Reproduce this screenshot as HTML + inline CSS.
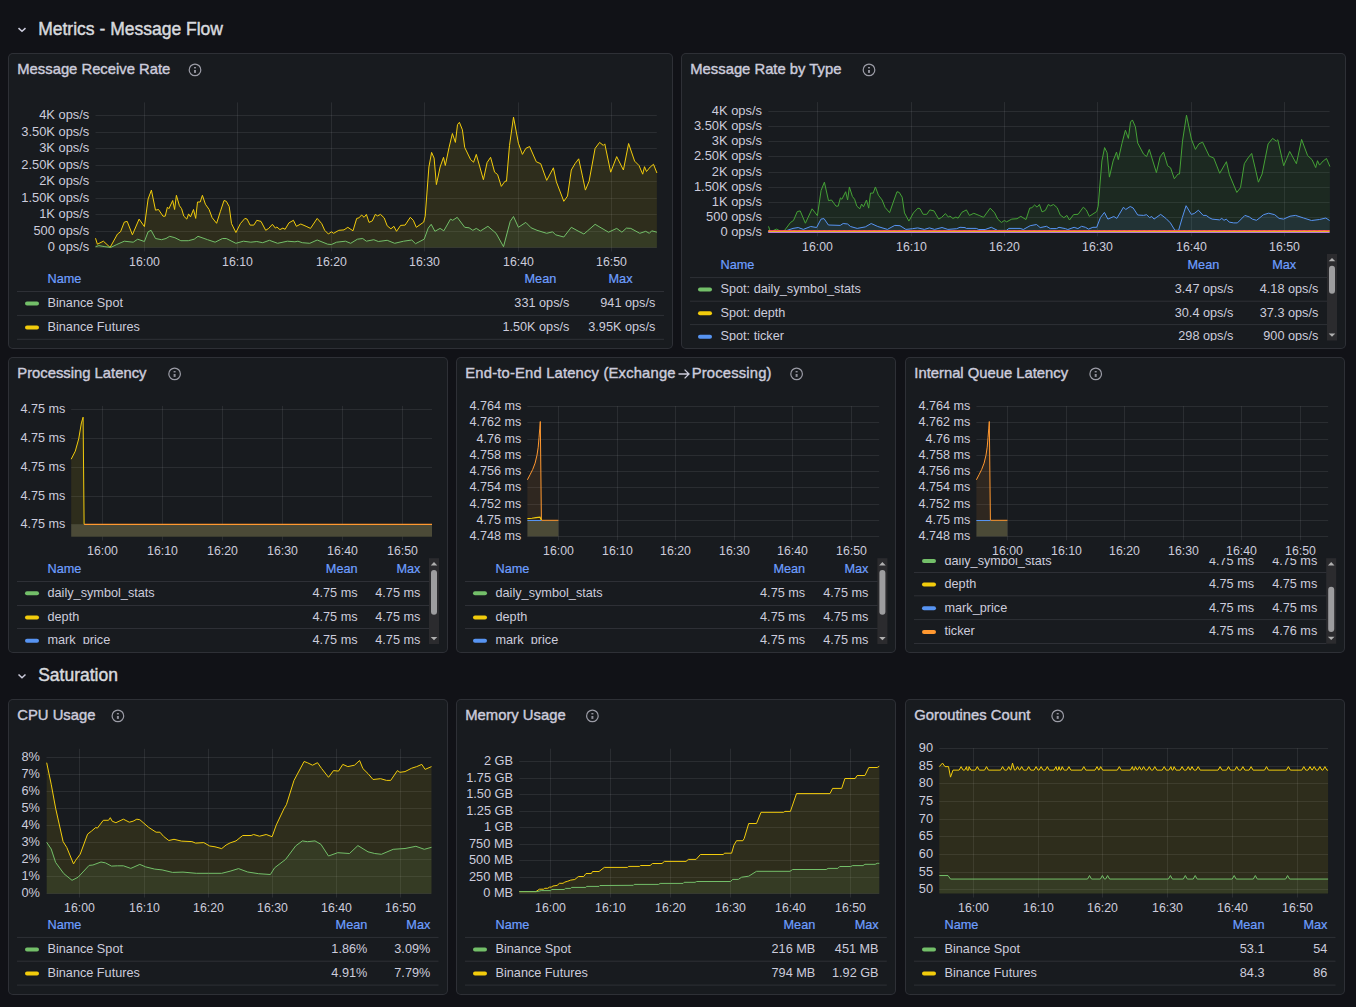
<!DOCTYPE html>
<html><head><meta charset="utf-8"><style>
html,body{margin:0;padding:0;background:#111217;width:1356px;height:1007px;overflow:hidden;position:relative;font-family:"Liberation Sans", sans-serif;}
.p{position:absolute;background:#181b1f;border:1px solid rgba(204,204,220,0.12);border-radius:5px;}
.t{position:absolute;height:20px;line-height:20px;white-space:nowrap;}
svg{position:absolute;left:0;top:0;}
</style></head><body>
<div class="p" style="left:8px;top:53px;width:663px;height:294px"></div><div class="p" style="left:681px;top:53px;width:663px;height:294px"></div><div class="p" style="left:8px;top:357px;width:438px;height:294px"></div><div class="p" style="left:456px;top:357px;width:438px;height:294px"></div><div class="p" style="left:905px;top:357px;width:438px;height:294px"></div><div class="p" style="left:8px;top:699px;width:438px;height:294px"></div><div class="p" style="left:456px;top:699px;width:438px;height:294px"></div><div class="p" style="left:905px;top:699px;width:438px;height:294px"></div>
<svg width="1356" height="1007" viewBox="0 0 1356 1007"><path d="M18.5,28.1 L22,31.3 L25.5,28.1" fill="none" stroke="#ccccdc" stroke-width="1.5"/><g transform="translate(195.0,69.9)"><circle r="5.8" stroke="#9b9ca6" stroke-width="1.2" fill="none"/><rect x="-1" y="-2.9" width="2" height="1.4" fill="#8f909a"/><rect x="-1" y="0.1" width="2" height="2.9" fill="#8f909a"/></g><line x1="95.5" y1="115.5" x2="656.8" y2="115.5" stroke="rgba(204,204,220,0.10)" stroke-width="1"/><line x1="95.5" y1="132.5" x2="656.8" y2="132.5" stroke="rgba(204,204,220,0.10)" stroke-width="1"/><line x1="95.5" y1="148.5" x2="656.8" y2="148.5" stroke="rgba(204,204,220,0.10)" stroke-width="1"/><line x1="95.5" y1="165.5" x2="656.8" y2="165.5" stroke="rgba(204,204,220,0.10)" stroke-width="1"/><line x1="95.5" y1="181.5" x2="656.8" y2="181.5" stroke="rgba(204,204,220,0.10)" stroke-width="1"/><line x1="95.5" y1="198.5" x2="656.8" y2="198.5" stroke="rgba(204,204,220,0.10)" stroke-width="1"/><line x1="95.5" y1="214.5" x2="656.8" y2="214.5" stroke="rgba(204,204,220,0.10)" stroke-width="1"/><line x1="95.5" y1="231.5" x2="656.8" y2="231.5" stroke="rgba(204,204,220,0.10)" stroke-width="1"/><line x1="95.5" y1="247.5" x2="656.8" y2="247.5" stroke="rgba(204,204,220,0.10)" stroke-width="1"/><line x1="144.5" y1="102.4" x2="144.5" y2="251.5" stroke="rgba(204,204,220,0.10)" stroke-width="1"/><line x1="237.5" y1="102.4" x2="237.5" y2="251.5" stroke="rgba(204,204,220,0.10)" stroke-width="1"/><line x1="331.5" y1="102.4" x2="331.5" y2="251.5" stroke="rgba(204,204,220,0.10)" stroke-width="1"/><line x1="424.5" y1="102.4" x2="424.5" y2="251.5" stroke="rgba(204,204,220,0.10)" stroke-width="1"/><line x1="518.5" y1="102.4" x2="518.5" y2="251.5" stroke="rgba(204,204,220,0.10)" stroke-width="1"/><line x1="611.5" y1="102.4" x2="611.5" y2="251.5" stroke="rgba(204,204,220,0.10)" stroke-width="1"/><polygon points="95.5,238.2 97.4,244.2 103.4,241.2 110.1,247.4 117.5,234 120.5,231.8 124.3,222.1 127.2,221.4 132.4,234.8 139.1,219.1 144.4,226.6 148.1,199 151.4,190.1 155.5,210.2 158.5,209.5 163,216.2 165.2,216.2 167.4,207.2 168.9,208.7 172.7,200.5 174.6,209.5 176.4,195.3 179.4,205.7 181.6,208.7 183.8,216.2 186.8,219.1 188.6,213.9 190.5,216.9 193.5,209.5 195.7,218.4 197.5,202 200.2,202 202.4,195.3 205.4,204.2 209.1,209.5 212.1,217.6 216.6,223.3 220.3,211.7 224,200.5 226.3,201.3 229.2,206.5 231.5,223.6 235.9,232.5 240.4,223.6 244.9,218.4 247.1,219.1 250.1,225.1 253.8,225.1 256.8,220.3 261,221.4 265.7,230.3 268.7,228.4 272.4,224.3 275.4,228.1 276.9,227 279.9,229.6 282.9,228.1 285.1,229.3 288.9,222.9 293.4,220.3 296.4,226.3 300.8,224 306.1,226.3 310.5,228.4 317.2,218.4 321.7,223.6 324.7,230.3 328.4,234 331.4,231.8 333.6,233.3 338.8,230.3 344,229.9 347.8,227.3 353,230.8 356.7,218.4 358.9,217.9 361.6,215 364.1,217.3 366.4,214.4 369,222.4 372.3,220.9 375.3,214.4 377.5,215.9 380.5,214.4 384.2,217.9 387.2,225.8 390.9,228.8 393.9,226.3 396.5,231.3 400.6,225.4 405.1,225.1 410.3,217.3 413.3,220.3 416.3,227.3 423.7,222.1 425.2,216.2 428.9,167 431.6,152.4 434.1,158.1 436.4,184.6 440.1,167 443.5,157.3 445.3,165.5 449,147.7 452.4,133.5 455.4,142.4 457.5,124.6 459.4,122.3 462.4,129.8 464.7,147.4 470.6,159.6 473.6,162.2 476.3,154.4 483.4,179.7 487.1,162.5 490.6,157.3 494.6,172.2 497.6,174.5 501.3,186.4 505,181.2 506.5,181.2 509.5,145.4 513.5,117.1 518.4,143.2 522.4,154.4 525.8,148.4 529.6,146.5 536.3,161.8 540.7,163.7 546.7,180.4 553.4,167.8 556.4,181.9 563.8,201.3 567.5,196.1 571.3,170 575,163.7 578.7,158.8 582.4,175.9 585.4,190.1 589.1,181.2 595.1,148.4 599.6,142.4 603.3,145.4 604.8,143.9 610.7,172.2 616.7,156.6 623.4,170 628.6,143.5 634.6,161.1 639,165.5 642.7,174.2 644.5,166.7 646.5,171.5 650.2,167 653.5,164.3 656.9,173 656.9,247.5 95.5,247.5" fill="#f2cc0c" fill-opacity="0.1" stroke="none"/><polyline points="95.5,238.2 97.4,244.2 103.4,241.2 110.1,247.4 117.5,234 120.5,231.8 124.3,222.1 127.2,221.4 132.4,234.8 139.1,219.1 144.4,226.6 148.1,199 151.4,190.1 155.5,210.2 158.5,209.5 163,216.2 165.2,216.2 167.4,207.2 168.9,208.7 172.7,200.5 174.6,209.5 176.4,195.3 179.4,205.7 181.6,208.7 183.8,216.2 186.8,219.1 188.6,213.9 190.5,216.9 193.5,209.5 195.7,218.4 197.5,202 200.2,202 202.4,195.3 205.4,204.2 209.1,209.5 212.1,217.6 216.6,223.3 220.3,211.7 224,200.5 226.3,201.3 229.2,206.5 231.5,223.6 235.9,232.5 240.4,223.6 244.9,218.4 247.1,219.1 250.1,225.1 253.8,225.1 256.8,220.3 261,221.4 265.7,230.3 268.7,228.4 272.4,224.3 275.4,228.1 276.9,227 279.9,229.6 282.9,228.1 285.1,229.3 288.9,222.9 293.4,220.3 296.4,226.3 300.8,224 306.1,226.3 310.5,228.4 317.2,218.4 321.7,223.6 324.7,230.3 328.4,234 331.4,231.8 333.6,233.3 338.8,230.3 344,229.9 347.8,227.3 353,230.8 356.7,218.4 358.9,217.9 361.6,215 364.1,217.3 366.4,214.4 369,222.4 372.3,220.9 375.3,214.4 377.5,215.9 380.5,214.4 384.2,217.9 387.2,225.8 390.9,228.8 393.9,226.3 396.5,231.3 400.6,225.4 405.1,225.1 410.3,217.3 413.3,220.3 416.3,227.3 423.7,222.1 425.2,216.2 428.9,167 431.6,152.4 434.1,158.1 436.4,184.6 440.1,167 443.5,157.3 445.3,165.5 449,147.7 452.4,133.5 455.4,142.4 457.5,124.6 459.4,122.3 462.4,129.8 464.7,147.4 470.6,159.6 473.6,162.2 476.3,154.4 483.4,179.7 487.1,162.5 490.6,157.3 494.6,172.2 497.6,174.5 501.3,186.4 505,181.2 506.5,181.2 509.5,145.4 513.5,117.1 518.4,143.2 522.4,154.4 525.8,148.4 529.6,146.5 536.3,161.8 540.7,163.7 546.7,180.4 553.4,167.8 556.4,181.9 563.8,201.3 567.5,196.1 571.3,170 575,163.7 578.7,158.8 582.4,175.9 585.4,190.1 589.1,181.2 595.1,148.4 599.6,142.4 603.3,145.4 604.8,143.9 610.7,172.2 616.7,156.6 623.4,170 628.6,143.5 634.6,161.1 639,165.5 642.7,174.2 644.5,166.7 646.5,171.5 650.2,167 653.5,164.3 656.9,173" fill="none" stroke="#f2cc0c" stroke-width="1.0" stroke-linejoin="round"/><polygon points="95.5,246.7 98.9,245.6 104.9,246.7 110.8,247.4 116.8,244.5 124.3,241.2 133.2,242.2 137.7,239.2 144.4,241.5 148.1,231.8 151.1,230.3 155.5,238.5 161.5,239.7 166,238.5 169.7,236.3 174.9,237.7 180.8,240.7 188.3,240.7 194.2,239.2 198,236.3 207.6,239.7 215.1,242.2 222.5,238.5 226.3,238.5 235.9,243.3 243.4,241.2 250.8,242.2 256.8,241.5 262.7,242.7 269.4,240.3 277.6,243.3 287.4,241.2 294.9,241.8 297.9,241.2 302.3,242.7 309.8,243.3 317.2,240 327.7,244.2 331.4,244.5 336.6,242.2 345.5,241.2 350.7,243.3 357.4,239.2 362.7,238.5 366.4,241.2 373.8,239.7 378.3,241.5 387.2,240.3 394.7,243.3 403.6,241.2 411.8,240 415.5,243.7 424.2,239.2 428.2,228.1 431.2,224.3 434.9,231.3 440.1,228.4 443.8,230.8 450.5,219.1 452.7,220.3 457.2,217.3 464.7,227.3 469.1,227.8 472.8,230.3 476.3,228.4 480.4,231 487.9,226.3 496.1,233.3 503.5,246.7 510.2,221.4 513.5,216.5 518.4,227.3 525.8,222.4 531.1,227.8 537,230.3 546.7,233.3 552.6,231.8 555.6,234.8 563.8,237 571.3,227.3 578,231 583.9,234 587.6,230.8 595.1,224.3 601,227.8 608.5,232.2 616.7,228.4 621.9,232.2 626.4,228.1 630.8,228.4 639.8,233.3 645.7,231.3 649.4,233.3 651.7,230.8 656.9,232.2 656.9,247.5 95.5,247.5" fill="#73bf69" fill-opacity="0.1" stroke="none"/><polyline points="95.5,246.7 98.9,245.6 104.9,246.7 110.8,247.4 116.8,244.5 124.3,241.2 133.2,242.2 137.7,239.2 144.4,241.5 148.1,231.8 151.1,230.3 155.5,238.5 161.5,239.7 166,238.5 169.7,236.3 174.9,237.7 180.8,240.7 188.3,240.7 194.2,239.2 198,236.3 207.6,239.7 215.1,242.2 222.5,238.5 226.3,238.5 235.9,243.3 243.4,241.2 250.8,242.2 256.8,241.5 262.7,242.7 269.4,240.3 277.6,243.3 287.4,241.2 294.9,241.8 297.9,241.2 302.3,242.7 309.8,243.3 317.2,240 327.7,244.2 331.4,244.5 336.6,242.2 345.5,241.2 350.7,243.3 357.4,239.2 362.7,238.5 366.4,241.2 373.8,239.7 378.3,241.5 387.2,240.3 394.7,243.3 403.6,241.2 411.8,240 415.5,243.7 424.2,239.2 428.2,228.1 431.2,224.3 434.9,231.3 440.1,228.4 443.8,230.8 450.5,219.1 452.7,220.3 457.2,217.3 464.7,227.3 469.1,227.8 472.8,230.3 476.3,228.4 480.4,231 487.9,226.3 496.1,233.3 503.5,246.7 510.2,221.4 513.5,216.5 518.4,227.3 525.8,222.4 531.1,227.8 537,230.3 546.7,233.3 552.6,231.8 555.6,234.8 563.8,237 571.3,227.3 578,231 583.9,234 587.6,230.8 595.1,224.3 601,227.8 608.5,232.2 616.7,228.4 621.9,232.2 626.4,228.1 630.8,228.4 639.8,233.3 645.7,231.3 649.4,233.3 651.7,230.8 656.9,232.2" fill="none" stroke="#73bf69" stroke-width="1.0" stroke-linejoin="round"/><line x1="17" y1="291.5" x2="664" y2="291.5" stroke="rgba(204,204,220,0.12)" stroke-width="1"/><line x1="17" y1="315.4" x2="664" y2="315.4" stroke="rgba(204,204,220,0.12)" stroke-width="1"/><line x1="17" y1="339.3" x2="664" y2="339.3" stroke="rgba(204,204,220,0.12)" stroke-width="1"/><rect x="25" y="301.5" width="14" height="4" rx="2" fill="#73bf69"/><rect x="25" y="325.5" width="14" height="4" rx="2" fill="#f2cc0c"/><g transform="translate(869.0,69.9)"><circle r="5.8" stroke="#9b9ca6" stroke-width="1.2" fill="none"/><rect x="-1" y="-2.9" width="2" height="1.4" fill="#8f909a"/><rect x="-1" y="0.1" width="2" height="2.9" fill="#8f909a"/></g><line x1="768.3" y1="111.5" x2="1329.6" y2="111.5" stroke="rgba(204,204,220,0.10)" stroke-width="1"/><line x1="768.3" y1="126.5" x2="1329.6" y2="126.5" stroke="rgba(204,204,220,0.10)" stroke-width="1"/><line x1="768.3" y1="141.5" x2="1329.6" y2="141.5" stroke="rgba(204,204,220,0.10)" stroke-width="1"/><line x1="768.3" y1="156.5" x2="1329.6" y2="156.5" stroke="rgba(204,204,220,0.10)" stroke-width="1"/><line x1="768.3" y1="172.5" x2="1329.6" y2="172.5" stroke="rgba(204,204,220,0.10)" stroke-width="1"/><line x1="768.3" y1="187.5" x2="1329.6" y2="187.5" stroke="rgba(204,204,220,0.10)" stroke-width="1"/><line x1="768.3" y1="202.5" x2="1329.6" y2="202.5" stroke="rgba(204,204,220,0.10)" stroke-width="1"/><line x1="768.3" y1="217.5" x2="1329.6" y2="217.5" stroke="rgba(204,204,220,0.10)" stroke-width="1"/><line x1="768.3" y1="232.5" x2="1329.6" y2="232.5" stroke="rgba(204,204,220,0.10)" stroke-width="1"/><line x1="817.5" y1="102.1" x2="817.5" y2="236.3" stroke="rgba(204,204,220,0.10)" stroke-width="1"/><line x1="911.5" y1="102.1" x2="911.5" y2="236.3" stroke="rgba(204,204,220,0.10)" stroke-width="1"/><line x1="1004.5" y1="102.1" x2="1004.5" y2="236.3" stroke="rgba(204,204,220,0.10)" stroke-width="1"/><line x1="1097.5" y1="102.1" x2="1097.5" y2="236.3" stroke="rgba(204,204,220,0.10)" stroke-width="1"/><line x1="1191.5" y1="102.1" x2="1191.5" y2="236.3" stroke="rgba(204,204,220,0.10)" stroke-width="1"/><line x1="1284.5" y1="102.1" x2="1284.5" y2="236.3" stroke="rgba(204,204,220,0.10)" stroke-width="1"/><polygon points="768.5,226.34 770.4,231.84 776.4,229.09 783.1,232.3 790.5,222.48 793.5,220.46 797.3,211.56 800.2,210.91 805.4,223.22 812.1,208.8 817.4,215.69 821.1,190.35 824.4,182.18 828.5,200.63 831.5,199.99 836,206.14 838.2,206.14 840.4,197.88 841.9,199.26 845.7,191.73 847.6,199.99 849.4,186.96 852.4,196.5 854.6,199.26 856.8,206.14 859.8,208.8 861.6,204.03 863.5,206.78 866.5,199.99 868.7,208.16 870.5,193.11 873.2,193.11 875.4,186.96 878.4,195.13 882.1,199.99 885.1,207.43 889.6,212.66 893.3,202.01 897,191.73 899.3,192.46 902.2,197.24 904.5,212.93 908.9,221.1 913.4,212.93 917.9,208.16 920.1,208.8 923.1,214.31 926.8,214.31 929.8,209.91 934,210.91 938.7,219.08 941.7,217.34 945.4,213.58 948.4,217.07 949.9,216.06 952.9,218.44 955.9,217.07 958.1,218.17 961.9,212.29 966.4,209.91 969.4,215.41 973.8,213.3 979.1,215.41 983.5,217.34 990.2,208.16 994.7,212.93 997.7,219.08 1001.4,222.48 1004.4,220.46 1006.6,221.84 1011.8,219.08 1017,218.72 1020.8,216.33 1026,219.54 1029.7,208.16 1031.9,207.7 1034.6,205.04 1037.1,207.15 1039.4,204.49 1042,211.83 1045.3,210.46 1048.3,204.49 1050.5,205.87 1053.5,204.49 1057.2,207.7 1060.2,214.95 1063.9,217.71 1066.9,215.41 1069.5,220 1073.6,214.59 1078.1,214.31 1083.3,207.15 1086.3,209.91 1089.3,216.33 1096.7,211.56 1098.2,206.14 1101.9,160.98 1104.6,147.58 1107.1,152.81 1109.4,177.13 1113.1,160.98 1116.5,152.08 1118.3,159.6 1122,143.26 1125.4,130.23 1128.4,138.4 1130.5,122.06 1132.4,119.95 1135.4,126.83 1137.7,142.99 1143.6,154.19 1146.6,156.57 1149.3,149.41 1156.4,172.64 1160.1,156.85 1163.6,152.08 1167.6,165.75 1170.6,167.86 1174.3,178.79 1178,174.01 1179.5,174.01 1182.5,141.15 1186.5,115.17 1191.4,139.13 1195.4,149.41 1198.8,143.91 1202.6,142.16 1209.3,156.21 1213.7,157.95 1219.7,173.28 1226.4,161.71 1229.4,174.66 1236.8,192.46 1240.5,187.69 1244.3,163.73 1248,157.95 1251.7,153.45 1255.4,169.15 1258.4,182.18 1262.1,174.01 1268.1,143.91 1272.6,138.4 1276.3,141.15 1277.8,139.78 1283.7,165.75 1289.7,151.43 1296.4,163.73 1301.6,139.41 1307.6,155.56 1312,159.6 1315.7,167.59 1317.5,160.7 1319.5,165.11 1323.2,160.98 1326.5,158.5 1329.9,166.49 1329.9,232.8 768.5,232.8" fill="#45a236" fill-opacity="0.1" stroke="none"/><polyline points="768.5,226.34 770.4,231.84 776.4,229.09 783.1,232.3 790.5,222.48 793.5,220.46 797.3,211.56 800.2,210.91 805.4,223.22 812.1,208.8 817.4,215.69 821.1,190.35 824.4,182.18 828.5,200.63 831.5,199.99 836,206.14 838.2,206.14 840.4,197.88 841.9,199.26 845.7,191.73 847.6,199.99 849.4,186.96 852.4,196.5 854.6,199.26 856.8,206.14 859.8,208.8 861.6,204.03 863.5,206.78 866.5,199.99 868.7,208.16 870.5,193.11 873.2,193.11 875.4,186.96 878.4,195.13 882.1,199.99 885.1,207.43 889.6,212.66 893.3,202.01 897,191.73 899.3,192.46 902.2,197.24 904.5,212.93 908.9,221.1 913.4,212.93 917.9,208.16 920.1,208.8 923.1,214.31 926.8,214.31 929.8,209.91 934,210.91 938.7,219.08 941.7,217.34 945.4,213.58 948.4,217.07 949.9,216.06 952.9,218.44 955.9,217.07 958.1,218.17 961.9,212.29 966.4,209.91 969.4,215.41 973.8,213.3 979.1,215.41 983.5,217.34 990.2,208.16 994.7,212.93 997.7,219.08 1001.4,222.48 1004.4,220.46 1006.6,221.84 1011.8,219.08 1017,218.72 1020.8,216.33 1026,219.54 1029.7,208.16 1031.9,207.7 1034.6,205.04 1037.1,207.15 1039.4,204.49 1042,211.83 1045.3,210.46 1048.3,204.49 1050.5,205.87 1053.5,204.49 1057.2,207.7 1060.2,214.95 1063.9,217.71 1066.9,215.41 1069.5,220 1073.6,214.59 1078.1,214.31 1083.3,207.15 1086.3,209.91 1089.3,216.33 1096.7,211.56 1098.2,206.14 1101.9,160.98 1104.6,147.58 1107.1,152.81 1109.4,177.13 1113.1,160.98 1116.5,152.08 1118.3,159.6 1122,143.26 1125.4,130.23 1128.4,138.4 1130.5,122.06 1132.4,119.95 1135.4,126.83 1137.7,142.99 1143.6,154.19 1146.6,156.57 1149.3,149.41 1156.4,172.64 1160.1,156.85 1163.6,152.08 1167.6,165.75 1170.6,167.86 1174.3,178.79 1178,174.01 1179.5,174.01 1182.5,141.15 1186.5,115.17 1191.4,139.13 1195.4,149.41 1198.8,143.91 1202.6,142.16 1209.3,156.21 1213.7,157.95 1219.7,173.28 1226.4,161.71 1229.4,174.66 1236.8,192.46 1240.5,187.69 1244.3,163.73 1248,157.95 1251.7,153.45 1255.4,169.15 1258.4,182.18 1262.1,174.01 1268.1,143.91 1272.6,138.4 1276.3,141.15 1277.8,139.78 1283.7,165.75 1289.7,151.43 1296.4,163.73 1301.6,139.41 1307.6,155.56 1312,159.6 1315.7,167.59 1317.5,160.7 1319.5,165.11 1323.2,160.98 1326.5,158.5 1329.9,166.49" fill="none" stroke="#45a236" stroke-width="1.0" stroke-linejoin="round"/><polygon points="767.9,231.9 773.8,231.3 782.7,232.4 787.1,230.4 793,228.4 798.2,227.5 803.3,229.4 810.7,226.5 816.6,227.5 821,219.1 824,218.6 828.4,225 840.2,225.4 843.2,223.5 847.6,224 850.5,226.5 857.2,228.4 865.3,226.9 871.2,223.5 877.8,226.5 887.4,229.4 894.8,225.4 900,225.7 905.9,229.4 912.5,228.7 917.7,227.9 924.3,229.4 929.5,227.9 934.6,229.4 942,227.5 947.9,229.4 956.7,228.7 960,227.3 965,227.6 966.3,228.4 976.3,228.4 978.8,229.5 985.1,229.5 991.3,227.3 997.6,230.4 1006.4,230.4 1008.9,228.4 1020.2,228.4 1023.3,229.5 1030.2,225.7 1036.5,224.5 1040.2,227.6 1046.5,226.3 1050.3,228.6 1056.5,228.6 1059,227.3 1065.3,228.6 1067.8,229.5 1074.1,227.3 1077.9,228.6 1081.6,226.3 1085.4,227.3 1088.5,229.1 1092.9,227.3 1096.7,227.3 1100.4,217.6 1104.4,212.4 1107.9,219.1 1113.8,216.5 1116.8,218.4 1123.5,207.2 1125.7,209.5 1130.2,206.5 1133.2,208 1137.7,215 1143.6,215.4 1146.6,214.7 1149.6,217.6 1151.8,216.5 1154,219.1 1160.7,214.4 1165.9,218.4 1170.4,222.9 1174.9,230.3 1178.6,230.3 1182.3,217.6 1186.1,205.7 1191.3,214.4 1194.2,213.5 1198.4,210.2 1203.2,215.4 1206.2,215.4 1209.1,217.6 1212.1,219.1 1219.6,219.9 1221.8,218.4 1224,220.3 1226.3,219.1 1229.2,222.1 1233.7,222.9 1237.4,222.9 1244.9,215.4 1249.3,216.9 1252.3,219.1 1256.5,220.3 1259,218.4 1263.5,214.7 1268.7,213.2 1274.7,214.7 1279.1,218.4 1283.6,219.1 1290,216.2 1295.6,215.4 1303.6,218 1311.5,220.5 1319.5,219.5 1325.8,218 1329.6,220.5 1329.6,232.8 767.9,232.8" fill="#5794f2" fill-opacity="0.1" stroke="none"/><polyline points="767.9,231.9 773.8,231.3 782.7,232.4 787.1,230.4 793,228.4 798.2,227.5 803.3,229.4 810.7,226.5 816.6,227.5 821,219.1 824,218.6 828.4,225 840.2,225.4 843.2,223.5 847.6,224 850.5,226.5 857.2,228.4 865.3,226.9 871.2,223.5 877.8,226.5 887.4,229.4 894.8,225.4 900,225.7 905.9,229.4 912.5,228.7 917.7,227.9 924.3,229.4 929.5,227.9 934.6,229.4 942,227.5 947.9,229.4 956.7,228.7 960,227.3 965,227.6 966.3,228.4 976.3,228.4 978.8,229.5 985.1,229.5 991.3,227.3 997.6,230.4 1006.4,230.4 1008.9,228.4 1020.2,228.4 1023.3,229.5 1030.2,225.7 1036.5,224.5 1040.2,227.6 1046.5,226.3 1050.3,228.6 1056.5,228.6 1059,227.3 1065.3,228.6 1067.8,229.5 1074.1,227.3 1077.9,228.6 1081.6,226.3 1085.4,227.3 1088.5,229.1 1092.9,227.3 1096.7,227.3 1100.4,217.6 1104.4,212.4 1107.9,219.1 1113.8,216.5 1116.8,218.4 1123.5,207.2 1125.7,209.5 1130.2,206.5 1133.2,208 1137.7,215 1143.6,215.4 1146.6,214.7 1149.6,217.6 1151.8,216.5 1154,219.1 1160.7,214.4 1165.9,218.4 1170.4,222.9 1174.9,230.3 1178.6,230.3 1182.3,217.6 1186.1,205.7 1191.3,214.4 1194.2,213.5 1198.4,210.2 1203.2,215.4 1206.2,215.4 1209.1,217.6 1212.1,219.1 1219.6,219.9 1221.8,218.4 1224,220.3 1226.3,219.1 1229.2,222.1 1233.7,222.9 1237.4,222.9 1244.9,215.4 1249.3,216.9 1252.3,219.1 1256.5,220.3 1259,218.4 1263.5,214.7 1268.7,213.2 1274.7,214.7 1279.1,218.4 1283.6,219.1 1290,216.2 1295.6,215.4 1303.6,218 1311.5,220.5 1319.5,219.5 1325.8,218 1329.6,220.5" fill="none" stroke="#5794f2" stroke-width="1.0" stroke-linejoin="round"/><line x1="768.3" y1="230.5" x2="1329.6" y2="230.5" stroke="#f2495c" stroke-width="1"/><line x1="768.3" y1="231.5" x2="1329.6" y2="231.5" stroke="#e0b62a" stroke-width="1"/><line x1="768.3" y1="231" x2="1329.6" y2="231" stroke="#ff9830" stroke-width="0.8" stroke-dasharray="2,3"/><line x1="768.3" y1="232.5" x2="1329.6" y2="232.5" stroke="#b877d9" stroke-width="1"/><clipPath id="c2_254"><rect x="681" y="254" width="646" height="86.5"/></clipPath><g clip-path="url(#c2_254)"><rect x="698" y="287.5" width="14" height="4" rx="2" fill="#73bf69"/><rect x="698" y="311.2" width="14" height="4" rx="2" fill="#f2cc0c"/><rect x="698" y="334.8" width="14" height="4" rx="2" fill="#5794f2"/></g><rect x="1327" y="254" width="10" height="86.5" fill="#2b2b2e"/><rect x="1329" y="265.8" width="6" height="28.0" rx="3" fill="#9d9d9f"/><path d="M1328.7,261.2 L1335.3,261.2 L1332,257.9 Z" fill="#b0b0b0"/><path d="M1328.7,333.5 L1335.3,333.5 L1332,336.8 Z" fill="#b0b0b0"/><line x1="690" y1="277.6" x2="1327" y2="277.6" stroke="rgba(204,204,220,0.12)" stroke-width="1"/><line x1="690" y1="301.2" x2="1327" y2="301.2" stroke="rgba(204,204,220,0.12)" stroke-width="1"/><line x1="690" y1="324.6" x2="1327" y2="324.6" stroke="rgba(204,204,220,0.12)" stroke-width="1"/><g transform="translate(174.6,373.9)"><circle r="5.8" stroke="#9b9ca6" stroke-width="1.2" fill="none"/><rect x="-1" y="-2.9" width="2" height="1.4" fill="#8f909a"/><rect x="-1" y="0.1" width="2" height="2.9" fill="#8f909a"/></g><line x1="71.2" y1="409.5" x2="432" y2="409.5" stroke="rgba(204,204,220,0.10)" stroke-width="1"/><line x1="71.2" y1="438.5" x2="432" y2="438.5" stroke="rgba(204,204,220,0.10)" stroke-width="1"/><line x1="71.2" y1="467.5" x2="432" y2="467.5" stroke="rgba(204,204,220,0.10)" stroke-width="1"/><line x1="71.2" y1="496.5" x2="432" y2="496.5" stroke="rgba(204,204,220,0.10)" stroke-width="1"/><line x1="71.2" y1="524.5" x2="432" y2="524.5" stroke="rgba(204,204,220,0.10)" stroke-width="1"/><line x1="102.5" y1="405.9" x2="102.5" y2="540.6" stroke="rgba(204,204,220,0.10)" stroke-width="1"/><line x1="162.5" y1="405.9" x2="162.5" y2="540.6" stroke="rgba(204,204,220,0.10)" stroke-width="1"/><line x1="222.5" y1="405.9" x2="222.5" y2="540.6" stroke="rgba(204,204,220,0.10)" stroke-width="1"/><line x1="282.5" y1="405.9" x2="282.5" y2="540.6" stroke="rgba(204,204,220,0.10)" stroke-width="1"/><line x1="342.5" y1="405.9" x2="342.5" y2="540.6" stroke="rgba(204,204,220,0.10)" stroke-width="1"/><line x1="402.5" y1="405.9" x2="402.5" y2="540.6" stroke="rgba(204,204,220,0.10)" stroke-width="1"/><rect x="71.2" y="524.3" width="360.8" height="12.400000000000091" fill="#4b4a37"/><polygon points="71.2,459.2 75.3,451.1 78.7,438.9 81.4,422.9 83.1,417.2 84.1,524.3 84.1,524.3 71.2,524.3" fill="#f2cc0c" fill-opacity="0.1" stroke="none"/><polyline points="71.2,459.2 75.3,451.1 78.7,438.9 81.4,422.9 83.1,417.2 84.1,524.3" fill="none" stroke="#f2cc0c" stroke-width="1.0" stroke-linejoin="round"/><line x1="84.1" y1="524.4" x2="432" y2="524.4" stroke="#ff9830" stroke-width="1.1"/><clipPath id="c3_558"><rect x="8" y="558.2" width="421" height="85.79999999999995"/></clipPath><g clip-path="url(#c3_558)"><rect x="25" y="591.3" width="14" height="4" rx="2" fill="#73bf69"/><rect x="25" y="615.5" width="14" height="4" rx="2" fill="#f2cc0c"/><rect x="25" y="638.7" width="14" height="4" rx="2" fill="#5794f2"/><rect x="25" y="662.4" width="14" height="4" rx="2" fill="#ff9830"/></g><rect x="429" y="558.2" width="10" height="85.79999999999995" fill="#2b2b2e"/><rect x="431" y="570" width="6" height="44.700000000000045" rx="3" fill="#9d9d9f"/><path d="M430.7,565.4 L437.3,565.4 L434,562.1 Z" fill="#b0b0b0"/><path d="M430.7,637 L437.3,637 L434,640.3 Z" fill="#b0b0b0"/><line x1="17" y1="581.5" x2="429" y2="581.5" stroke="rgba(204,204,220,0.12)" stroke-width="1"/><line x1="17" y1="605.5" x2="429" y2="605.5" stroke="rgba(204,204,220,0.12)" stroke-width="1"/><line x1="17" y1="628.5" x2="429" y2="628.5" stroke="rgba(204,204,220,0.12)" stroke-width="1"/><g transform="translate(796.6,373.9)"><circle r="5.8" stroke="#9b9ca6" stroke-width="1.2" fill="none"/><rect x="-1" y="-2.9" width="2" height="1.4" fill="#8f909a"/><rect x="-1" y="0.1" width="2" height="2.9" fill="#8f909a"/></g><line x1="527.4" y1="406.5" x2="879.2" y2="406.5" stroke="rgba(204,204,220,0.10)" stroke-width="1"/><line x1="527.4" y1="422.5" x2="879.2" y2="422.5" stroke="rgba(204,204,220,0.10)" stroke-width="1"/><line x1="527.4" y1="439.5" x2="879.2" y2="439.5" stroke="rgba(204,204,220,0.10)" stroke-width="1"/><line x1="527.4" y1="455.5" x2="879.2" y2="455.5" stroke="rgba(204,204,220,0.10)" stroke-width="1"/><line x1="527.4" y1="471.5" x2="879.2" y2="471.5" stroke="rgba(204,204,220,0.10)" stroke-width="1"/><line x1="527.4" y1="487.5" x2="879.2" y2="487.5" stroke="rgba(204,204,220,0.10)" stroke-width="1"/><line x1="527.4" y1="504.5" x2="879.2" y2="504.5" stroke="rgba(204,204,220,0.10)" stroke-width="1"/><line x1="527.4" y1="520.5" x2="879.2" y2="520.5" stroke="rgba(204,204,220,0.10)" stroke-width="1"/><line x1="527.4" y1="536.5" x2="879.2" y2="536.5" stroke="rgba(204,204,220,0.10)" stroke-width="1"/><line x1="558.5" y1="406.2" x2="558.5" y2="540.4" stroke="rgba(204,204,220,0.10)" stroke-width="1"/><line x1="617.5" y1="406.2" x2="617.5" y2="540.4" stroke="rgba(204,204,220,0.10)" stroke-width="1"/><line x1="675.5" y1="406.2" x2="675.5" y2="540.4" stroke="rgba(204,204,220,0.10)" stroke-width="1"/><line x1="734.5" y1="406.2" x2="734.5" y2="540.4" stroke="rgba(204,204,220,0.10)" stroke-width="1"/><line x1="792.5" y1="406.2" x2="792.5" y2="540.4" stroke="rgba(204,204,220,0.10)" stroke-width="1"/><line x1="851.5" y1="406.2" x2="851.5" y2="540.4" stroke="rgba(204,204,220,0.10)" stroke-width="1"/><rect x="527.4" y="520.3" width="31" height="16.100000000000023" fill="#4b4a37"/><polygon points="527.4,479.8 530.3,474.2 532.7,469.4 535.1,463.1 537,455.1 538.2,447.2 539,437.7 539.8,428.1 540.3,421.5 541.4,520.3 558.4,520.3 558.4,520.3 527.4,520.3" fill="#ff9830" fill-opacity="0.1" stroke="none"/><polyline points="527.4,479.8 530.3,474.2 532.7,469.4 535.1,463.1 537,455.1 538.2,447.2 539,437.7 539.8,428.1 540.3,421.5 541.4,520.3 558.4,520.3" fill="none" stroke="#ff9830" stroke-width="1.0" stroke-linejoin="round"/><polyline points="527.4,518.6 532,518.3 536,517.6 540,517.2 541.4,520.3" fill="none" stroke="#f2cc0c" stroke-width="1.1"/><line x1="527.4" y1="520.5" x2="541.4" y2="520.5" stroke="#5794f2" stroke-width="1"/><clipPath id="c4_558"><rect x="456" y="558.2" width="421.4" height="85.79999999999995"/></clipPath><g clip-path="url(#c4_558)"><rect x="473" y="591.3" width="14" height="4" rx="2" fill="#73bf69"/><rect x="473" y="615.5" width="14" height="4" rx="2" fill="#f2cc0c"/><rect x="473" y="638.7" width="14" height="4" rx="2" fill="#5794f2"/><rect x="473" y="662.4" width="14" height="4" rx="2" fill="#ff9830"/></g><rect x="877.4" y="558.2" width="10.0" height="85.79999999999995" fill="#2b2b2e"/><rect x="879.4" y="570" width="6.0" height="44.700000000000045" rx="3" fill="#9d9d9f"/><path d="M879.1,565.4 L885.7,565.4 L882.4,562.1 Z" fill="#b0b0b0"/><path d="M879.1,637 L885.7,637 L882.4,640.3 Z" fill="#b0b0b0"/><line x1="465" y1="581.5" x2="877.4" y2="581.5" stroke="rgba(204,204,220,0.12)" stroke-width="1"/><line x1="465" y1="605.5" x2="877.4" y2="605.5" stroke="rgba(204,204,220,0.12)" stroke-width="1"/><line x1="465" y1="628.5" x2="877.4" y2="628.5" stroke="rgba(204,204,220,0.12)" stroke-width="1"/><g transform="translate(1095.7,373.9)"><circle r="5.8" stroke="#9b9ca6" stroke-width="1.2" fill="none"/><rect x="-1" y="-2.9" width="2" height="1.4" fill="#8f909a"/><rect x="-1" y="0.1" width="2" height="2.9" fill="#8f909a"/></g><line x1="976.4" y1="406.5" x2="1328.2" y2="406.5" stroke="rgba(204,204,220,0.10)" stroke-width="1"/><line x1="976.4" y1="422.5" x2="1328.2" y2="422.5" stroke="rgba(204,204,220,0.10)" stroke-width="1"/><line x1="976.4" y1="439.5" x2="1328.2" y2="439.5" stroke="rgba(204,204,220,0.10)" stroke-width="1"/><line x1="976.4" y1="455.5" x2="1328.2" y2="455.5" stroke="rgba(204,204,220,0.10)" stroke-width="1"/><line x1="976.4" y1="471.5" x2="1328.2" y2="471.5" stroke="rgba(204,204,220,0.10)" stroke-width="1"/><line x1="976.4" y1="487.5" x2="1328.2" y2="487.5" stroke="rgba(204,204,220,0.10)" stroke-width="1"/><line x1="976.4" y1="504.5" x2="1328.2" y2="504.5" stroke="rgba(204,204,220,0.10)" stroke-width="1"/><line x1="976.4" y1="520.5" x2="1328.2" y2="520.5" stroke="rgba(204,204,220,0.10)" stroke-width="1"/><line x1="976.4" y1="536.5" x2="1328.2" y2="536.5" stroke="rgba(204,204,220,0.10)" stroke-width="1"/><line x1="1007.5" y1="406.2" x2="1007.5" y2="540.4" stroke="rgba(204,204,220,0.10)" stroke-width="1"/><line x1="1066.5" y1="406.2" x2="1066.5" y2="540.4" stroke="rgba(204,204,220,0.10)" stroke-width="1"/><line x1="1124.5" y1="406.2" x2="1124.5" y2="540.4" stroke="rgba(204,204,220,0.10)" stroke-width="1"/><line x1="1183.5" y1="406.2" x2="1183.5" y2="540.4" stroke="rgba(204,204,220,0.10)" stroke-width="1"/><line x1="1241.5" y1="406.2" x2="1241.5" y2="540.4" stroke="rgba(204,204,220,0.10)" stroke-width="1"/><line x1="1300.5" y1="406.2" x2="1300.5" y2="540.4" stroke="rgba(204,204,220,0.10)" stroke-width="1"/><rect x="976.4" y="520.3" width="31" height="16.100000000000023" fill="#4b4a37"/><polygon points="976.4,479.8 979.3,474.2 981.7,469.4 984.1,463.1 986,455.1 987.2,447.2 988,437.7 988.8,428.1 989.3,421.5 990.4,520.3 1007.4,520.3 1007.4,520.3 976.4,520.3" fill="#ff9830" fill-opacity="0.1" stroke="none"/><polyline points="976.4,479.8 979.3,474.2 981.7,469.4 984.1,463.1 986,455.1 987.2,447.2 988,437.7 988.8,428.1 989.3,421.5 990.4,520.3 1007.4,520.3" fill="none" stroke="#ff9830" stroke-width="1.0" stroke-linejoin="round"/><line x1="976.4" y1="520.5" x2="990.4" y2="520.5" stroke="#5794f2" stroke-width="1"/><clipPath id="c5_558"><rect x="905" y="558.2" width="421.20000000000005" height="91.79999999999995"/></clipPath><g clip-path="url(#c5_558)"><rect x="922" y="559" width="14" height="4" rx="2" fill="#73bf69"/><rect x="922" y="582.5" width="14" height="4" rx="2" fill="#f2cc0c"/><rect x="922" y="606.2" width="14" height="4" rx="2" fill="#5794f2"/><rect x="922" y="630" width="14" height="4" rx="2" fill="#ff9830"/></g><rect x="1326.2" y="558.2" width="10.0" height="85.5" fill="#2b2b2e"/><rect x="1328.2" y="586.8" width="6.0" height="45.30000000000007" rx="3" fill="#9d9d9f"/><path d="M1327.9,565.4 L1334.5,565.4 L1331.2,562.1 Z" fill="#b0b0b0"/><path d="M1327.9,636.7 L1334.5,636.7 L1331.2,640 Z" fill="#b0b0b0"/><line x1="914" y1="572.5" x2="1326.2" y2="572.5" stroke="rgba(204,204,220,0.12)" stroke-width="1"/><line x1="914" y1="595.8" x2="1326.2" y2="595.8" stroke="rgba(204,204,220,0.12)" stroke-width="1"/><line x1="914" y1="619.6" x2="1326.2" y2="619.6" stroke="rgba(204,204,220,0.12)" stroke-width="1"/><line x1="914" y1="643.5" x2="1326.2" y2="643.5" stroke="rgba(204,204,220,0.12)" stroke-width="1"/><path d="M18.5,674.5 L22,677.7 L25.5,674.5" fill="none" stroke="#ccccdc" stroke-width="1.5"/><g transform="translate(117.9,715.9)"><circle r="5.8" stroke="#9b9ca6" stroke-width="1.2" fill="none"/><rect x="-1" y="-2.9" width="2" height="1.4" fill="#8f909a"/><rect x="-1" y="0.1" width="2" height="2.9" fill="#8f909a"/></g><line x1="46.5" y1="757.5" x2="431.3" y2="757.5" stroke="rgba(204,204,220,0.10)" stroke-width="1"/><line x1="46.5" y1="774.5" x2="431.3" y2="774.5" stroke="rgba(204,204,220,0.10)" stroke-width="1"/><line x1="46.5" y1="791.5" x2="431.3" y2="791.5" stroke="rgba(204,204,220,0.10)" stroke-width="1"/><line x1="46.5" y1="808.5" x2="431.3" y2="808.5" stroke="rgba(204,204,220,0.10)" stroke-width="1"/><line x1="46.5" y1="825.5" x2="431.3" y2="825.5" stroke="rgba(204,204,220,0.10)" stroke-width="1"/><line x1="46.5" y1="842.5" x2="431.3" y2="842.5" stroke="rgba(204,204,220,0.10)" stroke-width="1"/><line x1="46.5" y1="859.5" x2="431.3" y2="859.5" stroke="rgba(204,204,220,0.10)" stroke-width="1"/><line x1="46.5" y1="876.5" x2="431.3" y2="876.5" stroke="rgba(204,204,220,0.10)" stroke-width="1"/><line x1="46.5" y1="893.5" x2="431.3" y2="893.5" stroke="rgba(204,204,220,0.10)" stroke-width="1"/><line x1="79.5" y1="748.8" x2="79.5" y2="897.5" stroke="rgba(204,204,220,0.10)" stroke-width="1"/><line x1="144.5" y1="748.8" x2="144.5" y2="897.5" stroke="rgba(204,204,220,0.10)" stroke-width="1"/><line x1="208.5" y1="748.8" x2="208.5" y2="897.5" stroke="rgba(204,204,220,0.10)" stroke-width="1"/><line x1="272.5" y1="748.8" x2="272.5" y2="897.5" stroke="rgba(204,204,220,0.10)" stroke-width="1"/><line x1="336.5" y1="748.8" x2="336.5" y2="897.5" stroke="rgba(204,204,220,0.10)" stroke-width="1"/><line x1="400.5" y1="748.8" x2="400.5" y2="897.5" stroke="rgba(204,204,220,0.10)" stroke-width="1"/><polygon points="46.7,762.7 51.2,784.2 55.6,808.1 63.1,841.6 66.8,847.5 73.5,863.9 75.7,860.2 80.2,854.2 87.6,834.1 91.4,831.2 95.8,827.4 97.3,828.2 103.3,820.3 108.5,820.3 110.3,817.7 112.2,821.2 115.9,822.7 123.4,819.2 129.3,822.2 133.1,821.2 136.8,819.2 139.8,819.7 148.7,827.4 156.1,832.2 159.9,832.2 163.6,836.4 168.8,840.5 174,839.3 181.5,841.1 191.9,841.6 195.6,843.1 203.8,842.6 209.7,846 215,846.8 221.7,848.6 226.1,845 230.1,842.9 236,840.9 242.7,835.5 251.1,835.5 253.6,834.5 259.5,836.2 266.2,834.5 272.1,836.7 276.3,824.9 283.9,808.9 286.4,804.7 294,780.4 304.1,761.5 307.4,762.7 312.5,765.2 317.5,762.7 321.7,768.6 328.5,777.3 333.5,770.6 338.5,771.1 342.8,764.4 347.8,766.6 354.5,765.2 359.6,760.5 362.9,768.6 368,773.6 373,779.5 380.6,778.7 386.5,780.4 390.7,780.4 397.4,770.6 399.9,772.3 405,771.6 411.7,768.2 416.7,766.6 421.8,764.4 425.1,769.4 431.5,766.6 431.5,893.5 46.7,893.5" fill="#f2cc0c" fill-opacity="0.1" stroke="none"/><polyline points="46.7,762.7 51.2,784.2 55.6,808.1 63.1,841.6 66.8,847.5 73.5,863.9 75.7,860.2 80.2,854.2 87.6,834.1 91.4,831.2 95.8,827.4 97.3,828.2 103.3,820.3 108.5,820.3 110.3,817.7 112.2,821.2 115.9,822.7 123.4,819.2 129.3,822.2 133.1,821.2 136.8,819.2 139.8,819.7 148.7,827.4 156.1,832.2 159.9,832.2 163.6,836.4 168.8,840.5 174,839.3 181.5,841.1 191.9,841.6 195.6,843.1 203.8,842.6 209.7,846 215,846.8 221.7,848.6 226.1,845 230.1,842.9 236,840.9 242.7,835.5 251.1,835.5 253.6,834.5 259.5,836.2 266.2,834.5 272.1,836.7 276.3,824.9 283.9,808.9 286.4,804.7 294,780.4 304.1,761.5 307.4,762.7 312.5,765.2 317.5,762.7 321.7,768.6 328.5,777.3 333.5,770.6 338.5,771.1 342.8,764.4 347.8,766.6 354.5,765.2 359.6,760.5 362.9,768.6 368,773.6 373,779.5 380.6,778.7 386.5,780.4 390.7,780.4 397.4,770.6 399.9,772.3 405,771.6 411.7,768.2 416.7,766.6 421.8,764.4 425.1,769.4 431.5,766.6" fill="none" stroke="#f2cc0c" stroke-width="1.0" stroke-linejoin="round"/><polygon points="46.7,842.3 51.2,849 55.6,862.4 63.8,873.6 72,880.3 78,877.3 89.1,865.4 92.9,865 101,862 105.5,862.9 111.5,866.1 117.4,865.8 123.4,865.8 130.8,868.4 139.8,864.4 145.7,866.9 154.7,869.1 162.1,869.9 172.5,872.4 183,872.1 196.3,873.3 208.3,873.3 221.7,873.3 230.1,871.2 238.5,868.6 247.7,872 258.7,873.7 270.4,874.5 274.6,867.8 285.6,859.4 295.7,845.9 302.4,840.9 307.4,841.7 315,840.9 320.9,844.3 328.5,856 337.7,852.7 349.5,853.5 357.9,845.6 368,851.8 374.7,853.5 381.4,854.3 393.2,849.3 405,848.5 415.9,846.3 424.3,849.3 431.5,847.3 431.5,893.5 46.7,893.5" fill="#73bf69" fill-opacity="0.1" stroke="none"/><polyline points="46.7,842.3 51.2,849 55.6,862.4 63.8,873.6 72,880.3 78,877.3 89.1,865.4 92.9,865 101,862 105.5,862.9 111.5,866.1 117.4,865.8 123.4,865.8 130.8,868.4 139.8,864.4 145.7,866.9 154.7,869.1 162.1,869.9 172.5,872.4 183,872.1 196.3,873.3 208.3,873.3 221.7,873.3 230.1,871.2 238.5,868.6 247.7,872 258.7,873.7 270.4,874.5 274.6,867.8 285.6,859.4 295.7,845.9 302.4,840.9 307.4,841.7 315,840.9 320.9,844.3 328.5,856 337.7,852.7 349.5,853.5 357.9,845.6 368,851.8 374.7,853.5 381.4,854.3 393.2,849.3 405,848.5 415.9,846.3 424.3,849.3 431.5,847.3" fill="none" stroke="#73bf69" stroke-width="1.0" stroke-linejoin="round"/><line x1="17" y1="937.4" x2="438.5" y2="937.4" stroke="rgba(204,204,220,0.12)" stroke-width="1"/><line x1="17" y1="961.2" x2="438.5" y2="961.2" stroke="rgba(204,204,220,0.12)" stroke-width="1"/><line x1="17" y1="985.1" x2="438.5" y2="985.1" stroke="rgba(204,204,220,0.12)" stroke-width="1"/><rect x="25" y="947.5" width="14" height="4" rx="2" fill="#73bf69"/><rect x="25" y="971.4" width="14" height="4" rx="2" fill="#f2cc0c"/><g transform="translate(592.4,715.9)"><circle r="5.8" stroke="#9b9ca6" stroke-width="1.2" fill="none"/><rect x="-1" y="-2.9" width="2" height="1.4" fill="#8f909a"/><rect x="-1" y="0.1" width="2" height="2.9" fill="#8f909a"/></g><line x1="519.3" y1="761.5" x2="879.3" y2="761.5" stroke="rgba(204,204,220,0.10)" stroke-width="1"/><line x1="519.3" y1="778.5" x2="879.3" y2="778.5" stroke="rgba(204,204,220,0.10)" stroke-width="1"/><line x1="519.3" y1="794.5" x2="879.3" y2="794.5" stroke="rgba(204,204,220,0.10)" stroke-width="1"/><line x1="519.3" y1="811.5" x2="879.3" y2="811.5" stroke="rgba(204,204,220,0.10)" stroke-width="1"/><line x1="519.3" y1="827.5" x2="879.3" y2="827.5" stroke="rgba(204,204,220,0.10)" stroke-width="1"/><line x1="519.3" y1="844.5" x2="879.3" y2="844.5" stroke="rgba(204,204,220,0.10)" stroke-width="1"/><line x1="519.3" y1="860.5" x2="879.3" y2="860.5" stroke="rgba(204,204,220,0.10)" stroke-width="1"/><line x1="519.3" y1="877.5" x2="879.3" y2="877.5" stroke="rgba(204,204,220,0.10)" stroke-width="1"/><line x1="519.3" y1="893.5" x2="879.3" y2="893.5" stroke="rgba(204,204,220,0.10)" stroke-width="1"/><line x1="550.5" y1="748.7" x2="550.5" y2="897.5" stroke="rgba(204,204,220,0.10)" stroke-width="1"/><line x1="610.5" y1="748.7" x2="610.5" y2="897.5" stroke="rgba(204,204,220,0.10)" stroke-width="1"/><line x1="670.5" y1="748.7" x2="670.5" y2="897.5" stroke="rgba(204,204,220,0.10)" stroke-width="1"/><line x1="730.5" y1="748.7" x2="730.5" y2="897.5" stroke="rgba(204,204,220,0.10)" stroke-width="1"/><line x1="790.5" y1="748.7" x2="790.5" y2="897.5" stroke="rgba(204,204,220,0.10)" stroke-width="1"/><line x1="850.5" y1="748.7" x2="850.5" y2="897.5" stroke="rgba(204,204,220,0.10)" stroke-width="1"/><polygon points="519.3,891.6 535.9,891.6 539.4,889.2 543.6,889.2 544.7,888.3 547.7,888.3 549.5,887.1 551.2,887.1 553,886 557.1,885.4 559.5,883.3 563,883.3 564.8,882.1 567.8,881.2 570.7,880.1 574.8,879.5 578.4,876.5 583.7,876.5 586,873.5 591.4,873.5 592.5,871.5 599,871.5 604.3,867.4 627.5,867.4 628.5,866.4 639.5,866.4 640.5,865.5 650.1,865.5 652.5,863.5 662,863.5 664.4,861.4 686,861.4 688.4,859.4 696.1,859.4 700.4,854.5 723.4,854.5 724.4,853.2 731.6,853.2 733.9,845.2 736.5,840.7 742.9,840.7 744.2,838.5 748.7,823.5 756.5,823.5 761,812.3 783.6,812.3 784.9,811.4 790.4,811.4 796.5,793.6 830,793.6 832.6,788.4 841.7,788.4 844.9,778.5 855.2,778.5 857.1,775.5 864.9,775.5 868.8,767.5 877.2,767.5 879.3,766.2 879.3,893.5 519.3,893.5" fill="#f2cc0c" fill-opacity="0.1" stroke="none"/><polyline points="519.3,891.6 535.9,891.6 539.4,889.2 543.6,889.2 544.7,888.3 547.7,888.3 549.5,887.1 551.2,887.1 553,886 557.1,885.4 559.5,883.3 563,883.3 564.8,882.1 567.8,881.2 570.7,880.1 574.8,879.5 578.4,876.5 583.7,876.5 586,873.5 591.4,873.5 592.5,871.5 599,871.5 604.3,867.4 627.5,867.4 628.5,866.4 639.5,866.4 640.5,865.5 650.1,865.5 652.5,863.5 662,863.5 664.4,861.4 686,861.4 688.4,859.4 696.1,859.4 700.4,854.5 723.4,854.5 724.4,853.2 731.6,853.2 733.9,845.2 736.5,840.7 742.9,840.7 744.2,838.5 748.7,823.5 756.5,823.5 761,812.3 783.6,812.3 784.9,811.4 790.4,811.4 796.5,793.6 830,793.6 832.6,788.4 841.7,788.4 844.9,778.5 855.2,778.5 857.1,775.5 864.9,775.5 868.8,767.5 877.2,767.5 879.3,766.2" fill="none" stroke="#f2cc0c" stroke-width="1.0" stroke-linejoin="round"/><polygon points="519.3,891.6 537.1,891.6 541.2,890.6 550.6,890.6 551.8,889.5 564.2,889.5 565.4,888.4 570.7,888.4 571.6,887.4 585.8,887.4 586.6,886.4 599,886.4 599.9,885.5 633.3,885.3 634.2,884.4 658.7,884.4 660.1,883.4 683.1,883.4 684.1,882.3 695.1,882.3 696.6,881.5 730.6,881.5 732.6,879.4 738.4,879.4 741.6,877.2 748.7,876.2 756.5,871.3 790,871.3 792.6,869.5 826.2,869.5 828.1,868.4 837.8,868.4 839.7,866.5 850.7,866.5 852.6,865.6 863,865.6 864.9,864.3 875.2,864.3 877.2,863.3 879.3,863.3 879.3,893.5 519.3,893.5" fill="#73bf69" fill-opacity="0.1" stroke="none"/><polyline points="519.3,891.6 537.1,891.6 541.2,890.6 550.6,890.6 551.8,889.5 564.2,889.5 565.4,888.4 570.7,888.4 571.6,887.4 585.8,887.4 586.6,886.4 599,886.4 599.9,885.5 633.3,885.3 634.2,884.4 658.7,884.4 660.1,883.4 683.1,883.4 684.1,882.3 695.1,882.3 696.6,881.5 730.6,881.5 732.6,879.4 738.4,879.4 741.6,877.2 748.7,876.2 756.5,871.3 790,871.3 792.6,869.5 826.2,869.5 828.1,868.4 837.8,868.4 839.7,866.5 850.7,866.5 852.6,865.6 863,865.6 864.9,864.3 875.2,864.3 877.2,863.3 879.3,863.3" fill="none" stroke="#73bf69" stroke-width="1.0" stroke-linejoin="round"/><line x1="465" y1="937.4" x2="886.8" y2="937.4" stroke="rgba(204,204,220,0.12)" stroke-width="1"/><line x1="465" y1="961.2" x2="886.8" y2="961.2" stroke="rgba(204,204,220,0.12)" stroke-width="1"/><line x1="465" y1="985.1" x2="886.8" y2="985.1" stroke="rgba(204,204,220,0.12)" stroke-width="1"/><rect x="473" y="947.5" width="14" height="4" rx="2" fill="#73bf69"/><rect x="473" y="971.4" width="14" height="4" rx="2" fill="#f2cc0c"/><g transform="translate(1057.7,715.9)"><circle r="5.8" stroke="#9b9ca6" stroke-width="1.2" fill="none"/><rect x="-1" y="-2.9" width="2" height="1.4" fill="#8f909a"/><rect x="-1" y="0.1" width="2" height="2.9" fill="#8f909a"/></g><line x1="939.3" y1="748.5" x2="1328.1" y2="748.5" stroke="rgba(204,204,220,0.10)" stroke-width="1"/><line x1="939.3" y1="766.5" x2="1328.1" y2="766.5" stroke="rgba(204,204,220,0.10)" stroke-width="1"/><line x1="939.3" y1="783.5" x2="1328.1" y2="783.5" stroke="rgba(204,204,220,0.10)" stroke-width="1"/><line x1="939.3" y1="801.5" x2="1328.1" y2="801.5" stroke="rgba(204,204,220,0.10)" stroke-width="1"/><line x1="939.3" y1="819.5" x2="1328.1" y2="819.5" stroke="rgba(204,204,220,0.10)" stroke-width="1"/><line x1="939.3" y1="836.5" x2="1328.1" y2="836.5" stroke="rgba(204,204,220,0.10)" stroke-width="1"/><line x1="939.3" y1="854.5" x2="1328.1" y2="854.5" stroke="rgba(204,204,220,0.10)" stroke-width="1"/><line x1="939.3" y1="872.5" x2="1328.1" y2="872.5" stroke="rgba(204,204,220,0.10)" stroke-width="1"/><line x1="939.3" y1="889.5" x2="1328.1" y2="889.5" stroke="rgba(204,204,220,0.10)" stroke-width="1"/><line x1="973.5" y1="748.2" x2="973.5" y2="897.5" stroke="rgba(204,204,220,0.10)" stroke-width="1"/><line x1="1038.5" y1="748.2" x2="1038.5" y2="897.5" stroke="rgba(204,204,220,0.10)" stroke-width="1"/><line x1="1102.5" y1="748.2" x2="1102.5" y2="897.5" stroke="rgba(204,204,220,0.10)" stroke-width="1"/><line x1="1167.5" y1="748.2" x2="1167.5" y2="897.5" stroke="rgba(204,204,220,0.10)" stroke-width="1"/><line x1="1232.5" y1="748.2" x2="1232.5" y2="897.5" stroke="rgba(204,204,220,0.10)" stroke-width="1"/><line x1="1297.5" y1="748.2" x2="1297.5" y2="897.5" stroke="rgba(204,204,220,0.10)" stroke-width="1"/><polygon points="939.3,766.61 942.5,763.1 945,766.61 948.5,766.61 950.5,777.15 953,770.12 959.1,770.12 961.1,766.61 963.1,770.12 964.6,770.12 966.6,766.61 967,770.12 968.6,770.12 969,766.61 971,770.12 975.3,770.12 977.3,766.61 979.3,770.12 984.5,770.12 986.5,766.61 988.5,770.12 1000.6,770.12 1002.6,766.61 1004.6,770.12 1006.8,770.12 1008.8,766.61 1010.5,770.12 1010.8,770.12 1012.5,763.1 1014.5,770.12 1015.5,770.12 1017.5,766.61 1019.5,770.12 1019.7,770.12 1021.7,766.61 1023.7,770.12 1026.7,770.12 1028.7,766.61 1030.7,770.12 1034.1,770.12 1036.1,766.61 1038.1,770.12 1039.1,770.12 1041.1,766.61 1043.1,770.12 1045.3,770.12 1047.3,766.61 1049.3,770.12 1054,770.12 1056,766.61 1057,770.12 1058,770.12 1059,766.61 1060.2,770.12 1061,770.12 1062.2,766.61 1064.2,770.12 1066.9,770.12 1068.9,766.61 1070.9,770.12 1081.8,770.12 1083.8,766.61 1085.8,770.12 1095,770.12 1097,766.61 1098.7,770.12 1099,770.12 1100.7,766.61 1102.7,770.12 1117.3,770.12 1119.3,766.61 1121.3,770.12 1130.4,770.12 1132.4,766.61 1133.4,770.12 1134.4,770.12 1135.4,766.61 1137.4,770.12 1137.4,770.12 1139.4,766.61 1141.4,770.12 1141.6,770.12 1143.6,766.61 1145.6,770.12 1147.3,770.12 1149.3,766.61 1151.3,770.12 1152.8,770.12 1154.8,766.61 1156.8,770.12 1162.2,770.12 1164.2,766.61 1166.2,770.12 1168.9,770.12 1170.9,766.61 1172.1,770.12 1172.9,770.12 1174.1,766.61 1176.1,770.12 1180.1,770.12 1182.1,766.61 1184.1,770.12 1186.3,770.12 1188.3,766.61 1190,770.12 1190.3,770.12 1192,766.61 1194,770.12 1196.2,770.12 1198.2,766.61 1200.2,770.12 1218.1,770.12 1220.1,766.61 1222.1,770.12 1226.5,770.12 1228.5,766.61 1230.5,770.12 1234.7,770.12 1236.7,766.61 1238.7,770.12 1240.9,770.12 1242.9,766.61 1244.9,770.12 1249.1,770.12 1251.1,766.61 1253.1,770.12 1264.5,770.12 1266.5,766.61 1268.5,770.12 1286.4,770.12 1288.4,766.61 1290.4,770.12 1301.8,770.12 1303.8,766.61 1305.8,770.12 1308,770.12 1310,766.61 1312,770.12 1312.2,770.12 1314.2,766.61 1316.2,770.12 1317.9,770.12 1319.9,766.61 1321.9,770.12 1322.9,770.12 1324.9,766.61 1326.9,770.12 1328.1,770.12 1328.1,893.5 939.3,893.5" fill="#f2cc0c" fill-opacity="0.1" stroke="none"/><polyline points="939.3,766.61 942.5,763.1 945,766.61 948.5,766.61 950.5,777.15 953,770.12 959.1,770.12 961.1,766.61 963.1,770.12 964.6,770.12 966.6,766.61 967,770.12 968.6,770.12 969,766.61 971,770.12 975.3,770.12 977.3,766.61 979.3,770.12 984.5,770.12 986.5,766.61 988.5,770.12 1000.6,770.12 1002.6,766.61 1004.6,770.12 1006.8,770.12 1008.8,766.61 1010.5,770.12 1010.8,770.12 1012.5,763.1 1014.5,770.12 1015.5,770.12 1017.5,766.61 1019.5,770.12 1019.7,770.12 1021.7,766.61 1023.7,770.12 1026.7,770.12 1028.7,766.61 1030.7,770.12 1034.1,770.12 1036.1,766.61 1038.1,770.12 1039.1,770.12 1041.1,766.61 1043.1,770.12 1045.3,770.12 1047.3,766.61 1049.3,770.12 1054,770.12 1056,766.61 1057,770.12 1058,770.12 1059,766.61 1060.2,770.12 1061,770.12 1062.2,766.61 1064.2,770.12 1066.9,770.12 1068.9,766.61 1070.9,770.12 1081.8,770.12 1083.8,766.61 1085.8,770.12 1095,770.12 1097,766.61 1098.7,770.12 1099,770.12 1100.7,766.61 1102.7,770.12 1117.3,770.12 1119.3,766.61 1121.3,770.12 1130.4,770.12 1132.4,766.61 1133.4,770.12 1134.4,770.12 1135.4,766.61 1137.4,770.12 1137.4,770.12 1139.4,766.61 1141.4,770.12 1141.6,770.12 1143.6,766.61 1145.6,770.12 1147.3,770.12 1149.3,766.61 1151.3,770.12 1152.8,770.12 1154.8,766.61 1156.8,770.12 1162.2,770.12 1164.2,766.61 1166.2,770.12 1168.9,770.12 1170.9,766.61 1172.1,770.12 1172.9,770.12 1174.1,766.61 1176.1,770.12 1180.1,770.12 1182.1,766.61 1184.1,770.12 1186.3,770.12 1188.3,766.61 1190,770.12 1190.3,770.12 1192,766.61 1194,770.12 1196.2,770.12 1198.2,766.61 1200.2,770.12 1218.1,770.12 1220.1,766.61 1222.1,770.12 1226.5,770.12 1228.5,766.61 1230.5,770.12 1234.7,770.12 1236.7,766.61 1238.7,770.12 1240.9,770.12 1242.9,766.61 1244.9,770.12 1249.1,770.12 1251.1,766.61 1253.1,770.12 1264.5,770.12 1266.5,766.61 1268.5,770.12 1286.4,770.12 1288.4,766.61 1290.4,770.12 1301.8,770.12 1303.8,766.61 1305.8,770.12 1308,770.12 1310,766.61 1312,770.12 1312.2,770.12 1314.2,766.61 1316.2,770.12 1317.9,770.12 1319.9,766.61 1321.9,770.12 1322.9,770.12 1324.9,766.61 1326.9,770.12 1328.1,770.12" fill="none" stroke="#f2cc0c" stroke-width="1.0" stroke-linejoin="round"/><polygon points="939.3,875.54 948,875.54 950.5,879.06 1087.5,879.06 1089.5,875.54 1091.5,879.06 1100.4,879.06 1102.4,875.54 1104.4,879.06 1105.6,879.06 1107.6,875.54 1109.6,879.06 1168.4,879.06 1170.4,875.54 1172.4,879.06 1183.3,879.06 1185.3,875.54 1187.3,879.06 1193.2,879.06 1195.2,875.54 1197.2,879.06 1232.2,879.06 1234.2,875.54 1236.2,879.06 1253.3,879.06 1255.3,875.54 1257.3,879.06 1285.6,879.06 1287.6,875.54 1289.6,879.06 1328.1,879.06 1328.1,893.5 939.3,893.5" fill="#73bf69" fill-opacity="0.1" stroke="none"/><polyline points="939.3,875.54 948,875.54 950.5,879.06 1087.5,879.06 1089.5,875.54 1091.5,879.06 1100.4,879.06 1102.4,875.54 1104.4,879.06 1105.6,879.06 1107.6,875.54 1109.6,879.06 1168.4,879.06 1170.4,875.54 1172.4,879.06 1183.3,879.06 1185.3,875.54 1187.3,879.06 1193.2,879.06 1195.2,875.54 1197.2,879.06 1232.2,879.06 1234.2,875.54 1236.2,879.06 1253.3,879.06 1255.3,875.54 1257.3,879.06 1285.6,879.06 1287.6,875.54 1289.6,879.06 1328.1,879.06" fill="none" stroke="#73bf69" stroke-width="1.0" stroke-linejoin="round"/><line x1="914" y1="937.4" x2="1335.5" y2="937.4" stroke="rgba(204,204,220,0.12)" stroke-width="1"/><line x1="914" y1="961.2" x2="1335.5" y2="961.2" stroke="rgba(204,204,220,0.12)" stroke-width="1"/><line x1="914" y1="985.1" x2="1335.5" y2="985.1" stroke="rgba(204,204,220,0.12)" stroke-width="1"/><rect x="922" y="947.5" width="14" height="4" rx="2" fill="#73bf69"/><rect x="922" y="971.4" width="14" height="4" rx="2" fill="#f2cc0c"/></svg>
<div class="t" style="left:38.2px;top:18.9px;font-size:17.5px;color:#d8d9de;font-weight:normal;-webkit-text-stroke:0.45px #d8d9de;">Metrics - Message Flow</div><div class="t" style="left:17.3px;top:59.4px;font-size:14.8px;color:#ccccdc;font-weight:normal;-webkit-text-stroke:0.4px #ccccdc;">Message Receive Rate</div><div class="t" style="left:-310.7px;width:400px;text-align:right;top:104.7px;font-size:12.9px;color:#ccccdc;font-weight:normal;">4K ops/s</div><div class="t" style="left:-310.7px;width:400px;text-align:right;top:121.7px;font-size:12.9px;color:#ccccdc;font-weight:normal;">3.50K ops/s</div><div class="t" style="left:-310.7px;width:400px;text-align:right;top:137.7px;font-size:12.9px;color:#ccccdc;font-weight:normal;">3K ops/s</div><div class="t" style="left:-310.7px;width:400px;text-align:right;top:154.7px;font-size:12.9px;color:#ccccdc;font-weight:normal;">2.50K ops/s</div><div class="t" style="left:-310.7px;width:400px;text-align:right;top:170.7px;font-size:12.9px;color:#ccccdc;font-weight:normal;">2K ops/s</div><div class="t" style="left:-310.7px;width:400px;text-align:right;top:187.7px;font-size:12.9px;color:#ccccdc;font-weight:normal;">1.50K ops/s</div><div class="t" style="left:-310.7px;width:400px;text-align:right;top:203.7px;font-size:12.9px;color:#ccccdc;font-weight:normal;">1K ops/s</div><div class="t" style="left:-310.7px;width:400px;text-align:right;top:220.7px;font-size:12.9px;color:#ccccdc;font-weight:normal;">500 ops/s</div><div class="t" style="left:-310.7px;width:400px;text-align:right;top:236.7px;font-size:12.9px;color:#ccccdc;font-weight:normal;">0 ops/s</div><div class="t" style="left:94.5px;width:100px;text-align:center;top:251.5px;font-size:12.3px;color:#ccccdc">16:00</div><div class="t" style="left:187.5px;width:100px;text-align:center;top:251.5px;font-size:12.3px;color:#ccccdc">16:10</div><div class="t" style="left:281.5px;width:100px;text-align:center;top:251.5px;font-size:12.3px;color:#ccccdc">16:20</div><div class="t" style="left:374.5px;width:100px;text-align:center;top:251.5px;font-size:12.3px;color:#ccccdc">16:30</div><div class="t" style="left:468.5px;width:100px;text-align:center;top:251.5px;font-size:12.3px;color:#ccccdc">16:40</div><div class="t" style="left:561.5px;width:100px;text-align:center;top:251.5px;font-size:12.3px;color:#ccccdc">16:50</div><div class="t" style="left:47.5px;top:268.6px;font-size:12.7px;color:#6e9fff;font-weight:normal;-webkit-text-stroke:0.2px #6e9fff;">Name</div><div class="t" style="left:156.3px;width:400px;text-align:right;top:268.6px;font-size:12.7px;color:#6e9fff;font-weight:normal;-webkit-text-stroke:0.2px #6e9fff;">Mean</div><div class="t" style="left:232.5px;width:400px;text-align:right;top:268.6px;font-size:12.7px;color:#6e9fff;font-weight:normal;-webkit-text-stroke:0.2px #6e9fff;">Max</div><div class="t" style="left:47.5px;top:293px;font-size:12.7px;color:#ccccdc;font-weight:normal;">Binance Spot</div><div class="t" style="left:169.4px;width:400px;text-align:right;top:293px;font-size:12.7px;color:#ccccdc;font-weight:normal;">331 ops/s</div><div class="t" style="left:255.3px;width:400px;text-align:right;top:293px;font-size:12.7px;color:#ccccdc;font-weight:normal;">941 ops/s</div><div class="t" style="left:47.5px;top:317px;font-size:12.7px;color:#ccccdc;font-weight:normal;">Binance Futures</div><div class="t" style="left:169.4px;width:400px;text-align:right;top:317px;font-size:12.7px;color:#ccccdc;font-weight:normal;">1.50K ops/s</div><div class="t" style="left:255.3px;width:400px;text-align:right;top:317px;font-size:12.7px;color:#ccccdc;font-weight:normal;">3.95K ops/s</div><div class="t" style="left:690.3px;top:59.4px;font-size:14.8px;color:#ccccdc;font-weight:normal;-webkit-text-stroke:0.4px #ccccdc;">Message Rate by Type</div><div class="t" style="left:362px;width:400px;text-align:right;top:100.7px;font-size:12.9px;color:#ccccdc;font-weight:normal;">4K ops/s</div><div class="t" style="left:362px;width:400px;text-align:right;top:115.7px;font-size:12.9px;color:#ccccdc;font-weight:normal;">3.50K ops/s</div><div class="t" style="left:362px;width:400px;text-align:right;top:130.7px;font-size:12.9px;color:#ccccdc;font-weight:normal;">3K ops/s</div><div class="t" style="left:362px;width:400px;text-align:right;top:145.7px;font-size:12.9px;color:#ccccdc;font-weight:normal;">2.50K ops/s</div><div class="t" style="left:362px;width:400px;text-align:right;top:161.7px;font-size:12.9px;color:#ccccdc;font-weight:normal;">2K ops/s</div><div class="t" style="left:362px;width:400px;text-align:right;top:176.7px;font-size:12.9px;color:#ccccdc;font-weight:normal;">1.50K ops/s</div><div class="t" style="left:362px;width:400px;text-align:right;top:191.7px;font-size:12.9px;color:#ccccdc;font-weight:normal;">1K ops/s</div><div class="t" style="left:362px;width:400px;text-align:right;top:206.7px;font-size:12.9px;color:#ccccdc;font-weight:normal;">500 ops/s</div><div class="t" style="left:362px;width:400px;text-align:right;top:221.7px;font-size:12.9px;color:#ccccdc;font-weight:normal;">0 ops/s</div><div class="t" style="left:767.5px;width:100px;text-align:center;top:236.7px;font-size:12.3px;color:#ccccdc">16:00</div><div class="t" style="left:861.5px;width:100px;text-align:center;top:236.7px;font-size:12.3px;color:#ccccdc">16:10</div><div class="t" style="left:954.5px;width:100px;text-align:center;top:236.7px;font-size:12.3px;color:#ccccdc">16:20</div><div class="t" style="left:1047.5px;width:100px;text-align:center;top:236.7px;font-size:12.3px;color:#ccccdc">16:30</div><div class="t" style="left:1141.5px;width:100px;text-align:center;top:236.7px;font-size:12.3px;color:#ccccdc">16:40</div><div class="t" style="left:1234.5px;width:100px;text-align:center;top:236.7px;font-size:12.3px;color:#ccccdc">16:50</div><div class="t" style="left:720.5px;top:254.6px;font-size:12.7px;color:#6e9fff;font-weight:normal;-webkit-text-stroke:0.2px #6e9fff;">Name</div><div class="t" style="left:819.3px;width:400px;text-align:right;top:254.6px;font-size:12.7px;color:#6e9fff;font-weight:normal;-webkit-text-stroke:0.2px #6e9fff;">Mean</div><div class="t" style="left:896.1px;width:400px;text-align:right;top:254.6px;font-size:12.7px;color:#6e9fff;font-weight:normal;-webkit-text-stroke:0.2px #6e9fff;">Max</div><div style="position:absolute;left:681px;top:254px;width:646px;height:86.5px;overflow:hidden"><div class="t" style="left:39.5px;top:25px;font-size:12.7px;color:#ccccdc">Spot: daily_symbol_stats</div><div class="t" style="left:152.3px;width:400px;text-align:right;top:25px;font-size:12.7px;color:#ccccdc">3.47 ops/s</div><div class="t" style="left:237.3px;width:400px;text-align:right;top:25px;font-size:12.7px;color:#ccccdc">4.18 ops/s</div><div class="t" style="left:39.5px;top:48.7px;font-size:12.7px;color:#ccccdc">Spot: depth</div><div class="t" style="left:152.3px;width:400px;text-align:right;top:48.7px;font-size:12.7px;color:#ccccdc">30.4 ops/s</div><div class="t" style="left:237.3px;width:400px;text-align:right;top:48.7px;font-size:12.7px;color:#ccccdc">37.3 ops/s</div><div class="t" style="left:39.5px;top:72.3px;font-size:12.7px;color:#ccccdc">Spot: ticker</div><div class="t" style="left:152.3px;width:400px;text-align:right;top:72.3px;font-size:12.7px;color:#ccccdc">298 ops/s</div><div class="t" style="left:237.3px;width:400px;text-align:right;top:72.3px;font-size:12.7px;color:#ccccdc">900 ops/s</div></div><div class="t" style="left:17.3px;top:363.4px;font-size:14.8px;color:#ccccdc;font-weight:normal;-webkit-text-stroke:0.4px #ccccdc;">Processing Latency</div><div class="t" style="left:-334.7px;width:400px;text-align:right;top:398.7px;font-size:12.6px;color:#ccccdc;font-weight:normal;">4.75 ms</div><div class="t" style="left:-334.7px;width:400px;text-align:right;top:427.7px;font-size:12.6px;color:#ccccdc;font-weight:normal;">4.75 ms</div><div class="t" style="left:-334.7px;width:400px;text-align:right;top:456.7px;font-size:12.6px;color:#ccccdc;font-weight:normal;">4.75 ms</div><div class="t" style="left:-334.7px;width:400px;text-align:right;top:485.7px;font-size:12.6px;color:#ccccdc;font-weight:normal;">4.75 ms</div><div class="t" style="left:-334.7px;width:400px;text-align:right;top:513.7px;font-size:12.6px;color:#ccccdc;font-weight:normal;">4.75 ms</div><div class="t" style="left:52.5px;width:100px;text-align:center;top:540.6px;font-size:12.3px;color:#ccccdc">16:00</div><div class="t" style="left:112.5px;width:100px;text-align:center;top:540.6px;font-size:12.3px;color:#ccccdc">16:10</div><div class="t" style="left:172.5px;width:100px;text-align:center;top:540.6px;font-size:12.3px;color:#ccccdc">16:20</div><div class="t" style="left:232.5px;width:100px;text-align:center;top:540.6px;font-size:12.3px;color:#ccccdc">16:30</div><div class="t" style="left:292.5px;width:100px;text-align:center;top:540.6px;font-size:12.3px;color:#ccccdc">16:40</div><div class="t" style="left:352.5px;width:100px;text-align:center;top:540.6px;font-size:12.3px;color:#ccccdc">16:50</div><div class="t" style="left:47.5px;top:558.75px;font-size:12.7px;color:#6e9fff;font-weight:normal;-webkit-text-stroke:0.2px #6e9fff;">Name</div><div class="t" style="left:-42.4px;width:400px;text-align:right;top:558.75px;font-size:12.7px;color:#6e9fff;font-weight:normal;-webkit-text-stroke:0.2px #6e9fff;">Mean</div><div class="t" style="left:20.4px;width:400px;text-align:right;top:558.75px;font-size:12.7px;color:#6e9fff;font-weight:normal;-webkit-text-stroke:0.2px #6e9fff;">Max</div><div style="position:absolute;left:8px;top:558.2px;width:421px;height:85.79999999999995px;overflow:hidden"><div class="t" style="left:39.5px;top:24.6px;font-size:12.7px;color:#ccccdc">daily_symbol_stats</div><div class="t" style="left:-50.4px;width:400px;text-align:right;top:24.6px;font-size:12.7px;color:#ccccdc">4.75 ms</div><div class="t" style="left:12.4px;width:400px;text-align:right;top:24.6px;font-size:12.7px;color:#ccccdc">4.75 ms</div><div class="t" style="left:39.5px;top:48.8px;font-size:12.7px;color:#ccccdc">depth</div><div class="t" style="left:-50.4px;width:400px;text-align:right;top:48.8px;font-size:12.7px;color:#ccccdc">4.75 ms</div><div class="t" style="left:12.4px;width:400px;text-align:right;top:48.8px;font-size:12.7px;color:#ccccdc">4.75 ms</div><div class="t" style="left:39.5px;top:72px;font-size:12.7px;color:#ccccdc">mark_price</div><div class="t" style="left:-50.4px;width:400px;text-align:right;top:72px;font-size:12.7px;color:#ccccdc">4.75 ms</div><div class="t" style="left:12.4px;width:400px;text-align:right;top:72px;font-size:12.7px;color:#ccccdc">4.75 ms</div><div class="t" style="left:39.5px;top:95.7px;font-size:12.7px;color:#ccccdc">ticker</div><div class="t" style="left:-50.4px;width:400px;text-align:right;top:95.7px;font-size:12.7px;color:#ccccdc">4.75 ms</div><div class="t" style="left:12.4px;width:400px;text-align:right;top:95.7px;font-size:12.7px;color:#ccccdc">4.76 ms</div></div><div class="t" style="left:465.3px;top:363.4px;font-size:14.8px;color:#ccccdc;font-weight:normal;-webkit-text-stroke:0.4px #ccccdc;"><span style="letter-spacing:0.17px">End-to-End Latency (Exchange</span><svg style="position:relative;display:inline-block;vertical-align:-1px;margin:0 2px 0 2px" width="12" height="10" viewBox="0 0 12 10"><path d="M0.5,5 L11,5 M6.6,0.6 L11,5 L6.6,9.4" fill="none" stroke="#ccccdc" stroke-width="1.3"/></svg><span style="letter-spacing:0.17px">Processing)</span></div><div class="t" style="left:121.2px;width:400px;text-align:right;top:395.7px;font-size:12.6px;color:#ccccdc;font-weight:normal;">4.764 ms</div><div class="t" style="left:121.2px;width:400px;text-align:right;top:411.7px;font-size:12.6px;color:#ccccdc;font-weight:normal;">4.762 ms</div><div class="t" style="left:121.2px;width:400px;text-align:right;top:428.7px;font-size:12.6px;color:#ccccdc;font-weight:normal;">4.76 ms</div><div class="t" style="left:121.2px;width:400px;text-align:right;top:444.7px;font-size:12.6px;color:#ccccdc;font-weight:normal;">4.758 ms</div><div class="t" style="left:121.2px;width:400px;text-align:right;top:460.7px;font-size:12.6px;color:#ccccdc;font-weight:normal;">4.756 ms</div><div class="t" style="left:121.2px;width:400px;text-align:right;top:476.7px;font-size:12.6px;color:#ccccdc;font-weight:normal;">4.754 ms</div><div class="t" style="left:121.2px;width:400px;text-align:right;top:493.7px;font-size:12.6px;color:#ccccdc;font-weight:normal;">4.752 ms</div><div class="t" style="left:121.2px;width:400px;text-align:right;top:509.7px;font-size:12.6px;color:#ccccdc;font-weight:normal;">4.75 ms</div><div class="t" style="left:121.2px;width:400px;text-align:right;top:525.7px;font-size:12.6px;color:#ccccdc;font-weight:normal;">4.748 ms</div><div class="t" style="left:508.5px;width:100px;text-align:center;top:540.6px;font-size:12.3px;color:#ccccdc">16:00</div><div class="t" style="left:567.5px;width:100px;text-align:center;top:540.6px;font-size:12.3px;color:#ccccdc">16:10</div><div class="t" style="left:625.5px;width:100px;text-align:center;top:540.6px;font-size:12.3px;color:#ccccdc">16:20</div><div class="t" style="left:684.5px;width:100px;text-align:center;top:540.6px;font-size:12.3px;color:#ccccdc">16:30</div><div class="t" style="left:742.5px;width:100px;text-align:center;top:540.6px;font-size:12.3px;color:#ccccdc">16:40</div><div class="t" style="left:801.5px;width:100px;text-align:center;top:540.6px;font-size:12.3px;color:#ccccdc">16:50</div><div class="t" style="left:495.5px;top:558.75px;font-size:12.7px;color:#6e9fff;font-weight:normal;-webkit-text-stroke:0.2px #6e9fff;">Name</div><div class="t" style="left:405.2px;width:400px;text-align:right;top:558.75px;font-size:12.7px;color:#6e9fff;font-weight:normal;-webkit-text-stroke:0.2px #6e9fff;">Mean</div><div class="t" style="left:468.4px;width:400px;text-align:right;top:558.75px;font-size:12.7px;color:#6e9fff;font-weight:normal;-webkit-text-stroke:0.2px #6e9fff;">Max</div><div style="position:absolute;left:456px;top:558.2px;width:421.4px;height:85.79999999999995px;overflow:hidden"><div class="t" style="left:39.5px;top:24.6px;font-size:12.7px;color:#ccccdc">daily_symbol_stats</div><div class="t" style="left:-50.8px;width:400px;text-align:right;top:24.6px;font-size:12.7px;color:#ccccdc">4.75 ms</div><div class="t" style="left:12.4px;width:400px;text-align:right;top:24.6px;font-size:12.7px;color:#ccccdc">4.75 ms</div><div class="t" style="left:39.5px;top:48.8px;font-size:12.7px;color:#ccccdc">depth</div><div class="t" style="left:-50.8px;width:400px;text-align:right;top:48.8px;font-size:12.7px;color:#ccccdc">4.75 ms</div><div class="t" style="left:12.4px;width:400px;text-align:right;top:48.8px;font-size:12.7px;color:#ccccdc">4.75 ms</div><div class="t" style="left:39.5px;top:72px;font-size:12.7px;color:#ccccdc">mark_price</div><div class="t" style="left:-50.8px;width:400px;text-align:right;top:72px;font-size:12.7px;color:#ccccdc">4.75 ms</div><div class="t" style="left:12.4px;width:400px;text-align:right;top:72px;font-size:12.7px;color:#ccccdc">4.75 ms</div><div class="t" style="left:39.5px;top:95.7px;font-size:12.7px;color:#ccccdc">ticker</div><div class="t" style="left:-50.8px;width:400px;text-align:right;top:95.7px;font-size:12.7px;color:#ccccdc">4.75 ms</div><div class="t" style="left:12.4px;width:400px;text-align:right;top:95.7px;font-size:12.7px;color:#ccccdc">4.76 ms</div></div><div class="t" style="left:914.3px;top:363.4px;font-size:14.8px;color:#ccccdc;font-weight:normal;-webkit-text-stroke:0.4px #ccccdc;">Internal Queue Latency</div><div class="t" style="left:570.2px;width:400px;text-align:right;top:395.7px;font-size:12.6px;color:#ccccdc;font-weight:normal;">4.764 ms</div><div class="t" style="left:570.2px;width:400px;text-align:right;top:411.7px;font-size:12.6px;color:#ccccdc;font-weight:normal;">4.762 ms</div><div class="t" style="left:570.2px;width:400px;text-align:right;top:428.7px;font-size:12.6px;color:#ccccdc;font-weight:normal;">4.76 ms</div><div class="t" style="left:570.2px;width:400px;text-align:right;top:444.7px;font-size:12.6px;color:#ccccdc;font-weight:normal;">4.758 ms</div><div class="t" style="left:570.2px;width:400px;text-align:right;top:460.7px;font-size:12.6px;color:#ccccdc;font-weight:normal;">4.756 ms</div><div class="t" style="left:570.2px;width:400px;text-align:right;top:476.7px;font-size:12.6px;color:#ccccdc;font-weight:normal;">4.754 ms</div><div class="t" style="left:570.2px;width:400px;text-align:right;top:493.7px;font-size:12.6px;color:#ccccdc;font-weight:normal;">4.752 ms</div><div class="t" style="left:570.2px;width:400px;text-align:right;top:509.7px;font-size:12.6px;color:#ccccdc;font-weight:normal;">4.75 ms</div><div class="t" style="left:570.2px;width:400px;text-align:right;top:525.7px;font-size:12.6px;color:#ccccdc;font-weight:normal;">4.748 ms</div><div class="t" style="left:957.5px;width:100px;text-align:center;top:540.6px;font-size:12.3px;color:#ccccdc">16:00</div><div class="t" style="left:1016.5px;width:100px;text-align:center;top:540.6px;font-size:12.3px;color:#ccccdc">16:10</div><div class="t" style="left:1074.5px;width:100px;text-align:center;top:540.6px;font-size:12.3px;color:#ccccdc">16:20</div><div class="t" style="left:1133.5px;width:100px;text-align:center;top:540.6px;font-size:12.3px;color:#ccccdc">16:30</div><div class="t" style="left:1191.5px;width:100px;text-align:center;top:540.6px;font-size:12.3px;color:#ccccdc">16:40</div><div class="t" style="left:1250.5px;width:100px;text-align:center;top:540.6px;font-size:12.3px;color:#ccccdc">16:50</div><div class="t" style="left:944.5px;top:-110px;font-size:12.7px;color:#6e9fff;font-weight:normal;-webkit-text-stroke:0.2px #6e9fff;">Name</div><div class="t" style="left:-400px;width:400px;text-align:right;top:-110px;font-size:12.7px;color:#6e9fff;font-weight:normal;-webkit-text-stroke:0.2px #6e9fff;">Mean</div><div class="t" style="left:-400px;width:400px;text-align:right;top:-110px;font-size:12.7px;color:#6e9fff;font-weight:normal;-webkit-text-stroke:0.2px #6e9fff;">Max</div><div style="position:absolute;left:905px;top:558.2px;width:421.20000000000005px;height:91.79999999999995px;overflow:hidden"><div class="t" style="left:39.5px;top:-7.7px;font-size:12.7px;color:#ccccdc">daily_symbol_stats</div><div class="t" style="left:-50.9px;width:400px;text-align:right;top:-7.7px;font-size:12.7px;color:#ccccdc">4.75 ms</div><div class="t" style="left:12.3px;width:400px;text-align:right;top:-7.7px;font-size:12.7px;color:#ccccdc">4.75 ms</div><div class="t" style="left:39.5px;top:15.8px;font-size:12.7px;color:#ccccdc">depth</div><div class="t" style="left:-50.9px;width:400px;text-align:right;top:15.8px;font-size:12.7px;color:#ccccdc">4.75 ms</div><div class="t" style="left:12.3px;width:400px;text-align:right;top:15.8px;font-size:12.7px;color:#ccccdc">4.75 ms</div><div class="t" style="left:39.5px;top:39.5px;font-size:12.7px;color:#ccccdc">mark_price</div><div class="t" style="left:-50.9px;width:400px;text-align:right;top:39.5px;font-size:12.7px;color:#ccccdc">4.75 ms</div><div class="t" style="left:12.3px;width:400px;text-align:right;top:39.5px;font-size:12.7px;color:#ccccdc">4.75 ms</div><div class="t" style="left:39.5px;top:63.3px;font-size:12.7px;color:#ccccdc">ticker</div><div class="t" style="left:-50.9px;width:400px;text-align:right;top:63.3px;font-size:12.7px;color:#ccccdc">4.75 ms</div><div class="t" style="left:12.3px;width:400px;text-align:right;top:63.3px;font-size:12.7px;color:#ccccdc">4.76 ms</div></div><div class="t" style="left:38.2px;top:665.3px;font-size:17.5px;color:#d8d9de;font-weight:normal;-webkit-text-stroke:0.45px #d8d9de;">Saturation</div><div class="t" style="left:17.3px;top:705.4px;font-size:14.8px;color:#ccccdc;font-weight:normal;-webkit-text-stroke:0.4px #ccccdc;">CPU Usage</div><div class="t" style="left:-360px;width:400px;text-align:right;top:746.7px;font-size:12.8px;color:#ccccdc;font-weight:normal;">8%</div><div class="t" style="left:-360px;width:400px;text-align:right;top:763.7px;font-size:12.8px;color:#ccccdc;font-weight:normal;">7%</div><div class="t" style="left:-360px;width:400px;text-align:right;top:780.7px;font-size:12.8px;color:#ccccdc;font-weight:normal;">6%</div><div class="t" style="left:-360px;width:400px;text-align:right;top:797.7px;font-size:12.8px;color:#ccccdc;font-weight:normal;">5%</div><div class="t" style="left:-360px;width:400px;text-align:right;top:814.7px;font-size:12.8px;color:#ccccdc;font-weight:normal;">4%</div><div class="t" style="left:-360px;width:400px;text-align:right;top:831.7px;font-size:12.8px;color:#ccccdc;font-weight:normal;">3%</div><div class="t" style="left:-360px;width:400px;text-align:right;top:848.7px;font-size:12.8px;color:#ccccdc;font-weight:normal;">2%</div><div class="t" style="left:-360px;width:400px;text-align:right;top:865.7px;font-size:12.8px;color:#ccccdc;font-weight:normal;">1%</div><div class="t" style="left:-360px;width:400px;text-align:right;top:882.7px;font-size:12.8px;color:#ccccdc;font-weight:normal;">0%</div><div class="t" style="left:29.5px;width:100px;text-align:center;top:897.6px;font-size:12.3px;color:#ccccdc">16:00</div><div class="t" style="left:94.5px;width:100px;text-align:center;top:897.6px;font-size:12.3px;color:#ccccdc">16:10</div><div class="t" style="left:158.5px;width:100px;text-align:center;top:897.6px;font-size:12.3px;color:#ccccdc">16:20</div><div class="t" style="left:222.5px;width:100px;text-align:center;top:897.6px;font-size:12.3px;color:#ccccdc">16:30</div><div class="t" style="left:286.5px;width:100px;text-align:center;top:897.6px;font-size:12.3px;color:#ccccdc">16:40</div><div class="t" style="left:350.5px;width:100px;text-align:center;top:897.6px;font-size:12.3px;color:#ccccdc">16:50</div><div class="t" style="left:47.5px;top:914.9px;font-size:12.7px;color:#6e9fff;font-weight:normal;-webkit-text-stroke:0.2px #6e9fff;">Name</div><div class="t" style="left:-32.7px;width:400px;text-align:right;top:914.9px;font-size:12.7px;color:#6e9fff;font-weight:normal;-webkit-text-stroke:0.2px #6e9fff;">Mean</div><div class="t" style="left:30.3px;width:400px;text-align:right;top:914.9px;font-size:12.7px;color:#6e9fff;font-weight:normal;-webkit-text-stroke:0.2px #6e9fff;">Max</div><div class="t" style="left:47.5px;top:939px;font-size:12.7px;color:#ccccdc;font-weight:normal;">Binance Spot</div><div class="t" style="left:-32.7px;width:400px;text-align:right;top:939px;font-size:12.7px;color:#ccccdc;font-weight:normal;">1.86%</div><div class="t" style="left:30.3px;width:400px;text-align:right;top:939px;font-size:12.7px;color:#ccccdc;font-weight:normal;">3.09%</div><div class="t" style="left:47.5px;top:962.9px;font-size:12.7px;color:#ccccdc;font-weight:normal;">Binance Futures</div><div class="t" style="left:-32.7px;width:400px;text-align:right;top:962.9px;font-size:12.7px;color:#ccccdc;font-weight:normal;">4.91%</div><div class="t" style="left:30.3px;width:400px;text-align:right;top:962.9px;font-size:12.7px;color:#ccccdc;font-weight:normal;">7.79%</div><div class="t" style="left:465.3px;top:705.4px;font-size:14.8px;color:#ccccdc;font-weight:normal;-webkit-text-stroke:0.4px #ccccdc;">Memory Usage</div><div class="t" style="left:113.1px;width:400px;text-align:right;top:750.7px;font-size:12.8px;color:#ccccdc;font-weight:normal;">2 GB</div><div class="t" style="left:113.1px;width:400px;text-align:right;top:767.7px;font-size:12.8px;color:#ccccdc;font-weight:normal;">1.75 GB</div><div class="t" style="left:113.1px;width:400px;text-align:right;top:783.7px;font-size:12.8px;color:#ccccdc;font-weight:normal;">1.50 GB</div><div class="t" style="left:113.1px;width:400px;text-align:right;top:800.7px;font-size:12.8px;color:#ccccdc;font-weight:normal;">1.25 GB</div><div class="t" style="left:113.1px;width:400px;text-align:right;top:816.7px;font-size:12.8px;color:#ccccdc;font-weight:normal;">1 GB</div><div class="t" style="left:113.1px;width:400px;text-align:right;top:833.7px;font-size:12.8px;color:#ccccdc;font-weight:normal;">750 MB</div><div class="t" style="left:113.1px;width:400px;text-align:right;top:849.7px;font-size:12.8px;color:#ccccdc;font-weight:normal;">500 MB</div><div class="t" style="left:113.1px;width:400px;text-align:right;top:866.7px;font-size:12.8px;color:#ccccdc;font-weight:normal;">250 MB</div><div class="t" style="left:113.1px;width:400px;text-align:right;top:882.7px;font-size:12.8px;color:#ccccdc;font-weight:normal;">0 MB</div><div class="t" style="left:500.5px;width:100px;text-align:center;top:897.6px;font-size:12.3px;color:#ccccdc">16:00</div><div class="t" style="left:560.5px;width:100px;text-align:center;top:897.6px;font-size:12.3px;color:#ccccdc">16:10</div><div class="t" style="left:620.5px;width:100px;text-align:center;top:897.6px;font-size:12.3px;color:#ccccdc">16:20</div><div class="t" style="left:680.5px;width:100px;text-align:center;top:897.6px;font-size:12.3px;color:#ccccdc">16:30</div><div class="t" style="left:740.5px;width:100px;text-align:center;top:897.6px;font-size:12.3px;color:#ccccdc">16:40</div><div class="t" style="left:800.5px;width:100px;text-align:center;top:897.6px;font-size:12.3px;color:#ccccdc">16:50</div><div class="t" style="left:495.5px;top:914.9px;font-size:12.7px;color:#6e9fff;font-weight:normal;-webkit-text-stroke:0.2px #6e9fff;">Name</div><div class="t" style="left:415.3px;width:400px;text-align:right;top:914.9px;font-size:12.7px;color:#6e9fff;font-weight:normal;-webkit-text-stroke:0.2px #6e9fff;">Mean</div><div class="t" style="left:478.6px;width:400px;text-align:right;top:914.9px;font-size:12.7px;color:#6e9fff;font-weight:normal;-webkit-text-stroke:0.2px #6e9fff;">Max</div><div class="t" style="left:495.5px;top:939px;font-size:12.7px;color:#ccccdc;font-weight:normal;">Binance Spot</div><div class="t" style="left:415.3px;width:400px;text-align:right;top:939px;font-size:12.7px;color:#ccccdc;font-weight:normal;">216 MB</div><div class="t" style="left:478.6px;width:400px;text-align:right;top:939px;font-size:12.7px;color:#ccccdc;font-weight:normal;">451 MB</div><div class="t" style="left:495.5px;top:962.9px;font-size:12.7px;color:#ccccdc;font-weight:normal;">Binance Futures</div><div class="t" style="left:415.3px;width:400px;text-align:right;top:962.9px;font-size:12.7px;color:#ccccdc;font-weight:normal;">794 MB</div><div class="t" style="left:478.6px;width:400px;text-align:right;top:962.9px;font-size:12.7px;color:#ccccdc;font-weight:normal;">1.92 GB</div><div class="t" style="left:914.3px;top:705.4px;font-size:14.8px;color:#ccccdc;font-weight:normal;-webkit-text-stroke:0.4px #ccccdc;">Goroutines Count</div><div class="t" style="left:533.1px;width:400px;text-align:right;top:737.7px;font-size:12.8px;color:#ccccdc;font-weight:normal;">90</div><div class="t" style="left:533.1px;width:400px;text-align:right;top:755.7px;font-size:12.8px;color:#ccccdc;font-weight:normal;">85</div><div class="t" style="left:533.1px;width:400px;text-align:right;top:772.7px;font-size:12.8px;color:#ccccdc;font-weight:normal;">80</div><div class="t" style="left:533.1px;width:400px;text-align:right;top:790.7px;font-size:12.8px;color:#ccccdc;font-weight:normal;">75</div><div class="t" style="left:533.1px;width:400px;text-align:right;top:808.7px;font-size:12.8px;color:#ccccdc;font-weight:normal;">70</div><div class="t" style="left:533.1px;width:400px;text-align:right;top:825.7px;font-size:12.8px;color:#ccccdc;font-weight:normal;">65</div><div class="t" style="left:533.1px;width:400px;text-align:right;top:843.7px;font-size:12.8px;color:#ccccdc;font-weight:normal;">60</div><div class="t" style="left:533.1px;width:400px;text-align:right;top:861.7px;font-size:12.8px;color:#ccccdc;font-weight:normal;">55</div><div class="t" style="left:533.1px;width:400px;text-align:right;top:878.7px;font-size:12.8px;color:#ccccdc;font-weight:normal;">50</div><div class="t" style="left:923.5px;width:100px;text-align:center;top:897.6px;font-size:12.3px;color:#ccccdc">16:00</div><div class="t" style="left:988.5px;width:100px;text-align:center;top:897.6px;font-size:12.3px;color:#ccccdc">16:10</div><div class="t" style="left:1052.5px;width:100px;text-align:center;top:897.6px;font-size:12.3px;color:#ccccdc">16:20</div><div class="t" style="left:1117.5px;width:100px;text-align:center;top:897.6px;font-size:12.3px;color:#ccccdc">16:30</div><div class="t" style="left:1182.5px;width:100px;text-align:center;top:897.6px;font-size:12.3px;color:#ccccdc">16:40</div><div class="t" style="left:1247.5px;width:100px;text-align:center;top:897.6px;font-size:12.3px;color:#ccccdc">16:50</div><div class="t" style="left:944.5px;top:914.9px;font-size:12.7px;color:#6e9fff;font-weight:normal;-webkit-text-stroke:0.2px #6e9fff;">Name</div><div class="t" style="left:864.5px;width:400px;text-align:right;top:914.9px;font-size:12.7px;color:#6e9fff;font-weight:normal;-webkit-text-stroke:0.2px #6e9fff;">Mean</div><div class="t" style="left:927.4px;width:400px;text-align:right;top:914.9px;font-size:12.7px;color:#6e9fff;font-weight:normal;-webkit-text-stroke:0.2px #6e9fff;">Max</div><div class="t" style="left:944.5px;top:939px;font-size:12.7px;color:#ccccdc;font-weight:normal;">Binance Spot</div><div class="t" style="left:864.5px;width:400px;text-align:right;top:939px;font-size:12.7px;color:#ccccdc;font-weight:normal;">53.1</div><div class="t" style="left:927.4px;width:400px;text-align:right;top:939px;font-size:12.7px;color:#ccccdc;font-weight:normal;">54</div><div class="t" style="left:944.5px;top:962.9px;font-size:12.7px;color:#ccccdc;font-weight:normal;">Binance Futures</div><div class="t" style="left:864.5px;width:400px;text-align:right;top:962.9px;font-size:12.7px;color:#ccccdc;font-weight:normal;">84.3</div><div class="t" style="left:927.4px;width:400px;text-align:right;top:962.9px;font-size:12.7px;color:#ccccdc;font-weight:normal;">86</div>
</body></html>
